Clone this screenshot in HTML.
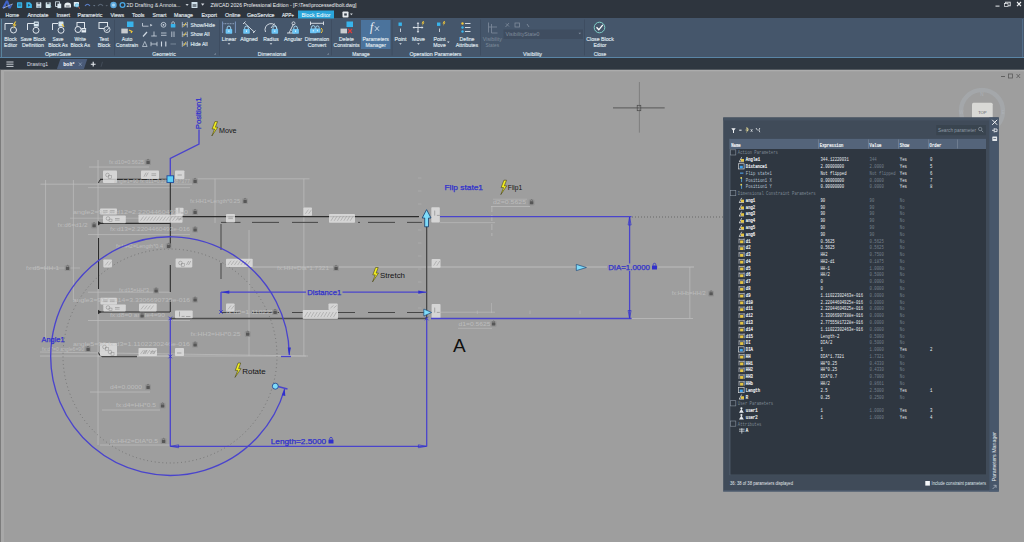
<!DOCTYPE html>
<html><head><meta charset="utf-8"><title>ZWCAD 2026 Professional Edition - bolt.dwg</title>
<style>
html,body{margin:0;padding:0;}
body{width:1024px;height:542px;overflow:hidden;position:relative;background:#9e9e9e;font-family:"Liberation Sans",sans-serif;}
svg{position:absolute;left:0;top:0;display:block;}
text{font-family:"Liberation Sans",sans-serif;}
.b{stroke:#dfe4eb;stroke-width:0.16px;}
.m{font-family:"Liberation Mono",monospace;}
</style></head><body>
<svg width="1024" height="542" viewBox="0 0 1024 542">
<rect x="0" y="0" width="1024" height="18" fill="#2e353e"/>
<rect x="0" y="18" width="1024" height="40" fill="#45566b"/>
<rect x="0" y="57" width="1024" height="1" fill="#5a85a6"/>
<rect x="0" y="58" width="1024" height="12" fill="#2f3740"/>
<rect x="0" y="70" width="1024" height="472" fill="#9e9e9e"/>
<rect x="0" y="69.7" width="1024" height="1.6" fill="#acacac"/>
<rect x="0" y="70" width="1" height="472" fill="#7c7c7c"/>
<rect x="1" y="70" width="3" height="472" fill="#a8a8a8"/>
<path d="M2 8 L6 0.5 L8 0.5 L10 6 L13 3.5 L10.5 8.5 L8.5 8.5 L7 3 L4.5 8.5 Z" fill="#3f63c8"/>
<path d="M3 8.2 L12.5 4" stroke="#c8d4ee" stroke-width="0.7" fill="none"/>
<rect x="17" y="2.2" width="5.2" height="5.7" rx="0.7" fill="#37b6ec"/><rect x="18" y="3.7" width="3.2" height="0.8" fill="#2e353e" opacity="0.7"/><rect x="18" y="5.4" width="3.2" height="0.8" fill="#2e353e" opacity="0.7"/>
<path d="M26.3 2.2 h3.6 l2 2 v3.7 h-5.6z" fill="#37b6ec"/><path d="M28 3.8 l2.4 1.5 l-2.4 1.5z" fill="#2e353e" opacity="0.75"/>
<rect x="36.3" y="2.2" width="5" height="5.7" rx="0.6" fill="#dbe9f2"/><rect x="37.5" y="2.2" width="2.6" height="2" fill="#2e353e" opacity="0.7"/><rect x="37.3" y="5.6" width="3" height="2.3" fill="#8fa3b3"/>
<rect x="45.7" y="2.2" width="5" height="5.7" rx="0.6" fill="#d4e8ee"/><rect x="46.9" y="2.2" width="2.6" height="2" fill="#2e353e" opacity="0.7"/><path d="M49.5 5 l1.8 1.6" stroke="#8fd0e8" stroke-width="1"/>
<rect x="55.6" y="1.8" width="3.8" height="4.6" fill="none" stroke="#dbe9f2" stroke-width="0.8"/><rect x="57.4" y="3.6" width="3.8" height="4.6" fill="#dbe9f2"/>
<path d="M64.4 7.6 v-2.2 a3.3 2.8 0 0 1 6.6 0 v2.2z" fill="#e8eef2"/><rect x="65.8" y="5.4" width="3.8" height="1.2" fill="#2e353e" opacity="0.6"/>
<rect x="73.8" y="2" width="5.2" height="4.6" rx="0.5" fill="#dbe9f2"/><circle cx="77" cy="5.4" r="1.7" fill="#9fdcf4" stroke="#49a8d6" stroke-width="0.6"/><path d="M78.2 6.8 L80 8.6" stroke="#e06040" stroke-width="0.9"/>
<path d="M85 6 q2.5 -3.5 5 0" stroke="#5b7fc8" stroke-width="1.1" fill="none"/><path d="M93 5 l1.2 1.6 l1.2 -1.6z" fill="#69788a"/>
<path d="M98 6 q2.5 -3.5 5 0" stroke="#5a6675" stroke-width="1.1" fill="none"/><path d="M105.5 5 l1.2 1.6 l1.2 -1.6z" fill="#59636f"/>
<circle cx="113.5" cy="5" r="3.2" fill="#5aa6dc"/><circle cx="113.5" cy="5" r="1.6" fill="#a7d4f2"/>
<circle cx="122.5" cy="5" r="2.4" fill="none" stroke="#49a8e6" stroke-width="1.3"/>
<text x="126.5" y="7.2" font-size="5.2" fill="#e2e6ea" text-anchor="start" textLength="54" lengthAdjust="spacingAndGlyphs" >2D Drafting &amp; Annota...</text>
<path d="M185.5 4 l1.6 2 l1.6 -2z" fill="#c9cfd6"/>
<rect x="191.5" y="2" width="6" height="6" rx="0.6" fill="#cfe0ea"/><rect x="192.6" y="4" width="3.8" height="3" fill="#2e353e" opacity="0.55"/>
<path d="M201 3.5 h3.4 l-1.7 2.2z" fill="#d7dce2"/>
<text x="210.5" y="7.2" font-size="5.2" fill="#eef1f4" text-anchor="start" textLength="146" lengthAdjust="spacingAndGlyphs" >ZWCAD 2026 Professional Edition - [F:\Test\processed\bolt.dwg]</text>
<rect x="995.5" y="5.6" width="4" height="1" fill="#e8ebee"/>
<rect x="1005.6" y="2.2" width="4.6" height="3.6" fill="none" stroke="#e8ebee" stroke-width="0.9"/><rect x="1004.6" y="3.6" width="3.4" height="2.8" fill="#2e353e" stroke="#e8ebee" stroke-width="0.7"/>
<path d="M1017 2 l4 4.2 M1021 2 l-4 4.2" stroke="#f2f4f6" stroke-width="1.1"/>
<text x="5.6" y="17.2" font-size="5.2" fill="#e6e9ed" text-anchor="start" textLength="13.5" lengthAdjust="spacingAndGlyphs" class="b">Home</text>
<text x="27.4" y="17.2" font-size="5.2" fill="#e6e9ed" text-anchor="start" textLength="20.9" lengthAdjust="spacingAndGlyphs" class="b">Annotate</text>
<text x="56.5" y="17.2" font-size="5.2" fill="#e6e9ed" text-anchor="start" textLength="13.5" lengthAdjust="spacingAndGlyphs" class="b">Insert</text>
<text x="77.5" y="17.2" font-size="5.2" fill="#e6e9ed" text-anchor="start" textLength="24.8" lengthAdjust="spacingAndGlyphs" class="b">Parametric</text>
<text x="110.5" y="17.2" font-size="5.2" fill="#e6e9ed" text-anchor="start" textLength="13.5" lengthAdjust="spacingAndGlyphs" class="b">Views</text>
<text x="132" y="17.2" font-size="5.2" fill="#e6e9ed" text-anchor="start" textLength="12.5" lengthAdjust="spacingAndGlyphs" class="b">Tools</text>
<text x="152.5" y="17.2" font-size="5.2" fill="#e6e9ed" text-anchor="start" textLength="14" lengthAdjust="spacingAndGlyphs" class="b">Smart</text>
<text x="174" y="17.2" font-size="5.2" fill="#e6e9ed" text-anchor="start" textLength="19" lengthAdjust="spacingAndGlyphs" class="b">Manage</text>
<text x="201.5" y="17.2" font-size="5.2" fill="#e6e9ed" text-anchor="start" textLength="15.5" lengthAdjust="spacingAndGlyphs" class="b">Export</text>
<text x="225" y="17.2" font-size="5.2" fill="#e6e9ed" text-anchor="start" textLength="15.5" lengthAdjust="spacingAndGlyphs" class="b">Online</text>
<text x="247" y="17.2" font-size="5.2" fill="#e6e9ed" text-anchor="start" textLength="27.5" lengthAdjust="spacingAndGlyphs" class="b">GeoService</text>
<text x="282" y="17.2" font-size="5.2" fill="#e6e9ed" text-anchor="start" textLength="12" lengthAdjust="spacingAndGlyphs" class="b">APP+</text>
<rect x="298" y="10.5" width="36" height="8" fill="#2aa5da"/>
<text x="316" y="17.0" font-size="5.2" fill="#ffffff" text-anchor="middle" textLength="29" lengthAdjust="spacingAndGlyphs" >Block Editor</text>
<rect x="342.5" y="11.5" width="6" height="6" rx="0.8" fill="#e6eaee"/><rect x="344.2" y="13.4" width="2.6" height="2.2" fill="#39424d"/>
<path d="M350 13.6 l1.4 1.6 l1.4 -1.6z" fill="#d7dce2"/>
<rect x="1" y="19" width="0.8" height="38" fill="#5f90aa"/>
<rect x="1022" y="19" width="0.8" height="38" fill="#56728f"/>
<path d="M5 30 V23.5 H13" stroke="#dfe5ec" stroke-width="1" fill="none"/><circle cx="13.5" cy="30" r="3" fill="none" stroke="#dfe5ec" stroke-width="1"/><path d="M15 21.5 l-2.5 4 h2 l-1.5 3.5 l3.5 -4.5 h-2 l1.8 -3z" fill="#f2c83a"/>
<text x="10.6" y="40.6" font-size="5.2" fill="#dfe4eb" text-anchor="middle" textLength="12.5" lengthAdjust="spacingAndGlyphs" class="b">Block</text>
<text x="10.6" y="47.2" font-size="5.2" fill="#dfe4eb" text-anchor="middle" textLength="13" lengthAdjust="spacingAndGlyphs" class="b">Editor</text>
<path d="M27.5 30 V23.5 H34" stroke="#dfe5ec" stroke-width="1" fill="none"/><circle cx="36" cy="30.3" r="3" fill="none" stroke="#dfe5ec" stroke-width="1"/><rect x="33.8" y="21.5" width="5" height="5" rx="0.6" fill="#d7e6f0"/><rect x="34.8" y="22.8" width="3" height="1" fill="#45566b"/>
<text x="33" y="40.6" font-size="5.2" fill="#dfe4eb" text-anchor="middle" textLength="25" lengthAdjust="spacingAndGlyphs" class="b">Save Block</text>
<text x="33" y="47.2" font-size="5.2" fill="#dfe4eb" text-anchor="middle" textLength="22" lengthAdjust="spacingAndGlyphs" class="b">Definition</text>
<path d="M52.5 30 V23.5 H58" stroke="#dfe5ec" stroke-width="1" fill="none"/><circle cx="61" cy="30.3" r="3" fill="none" stroke="#dfe5ec" stroke-width="1"/><rect x="58.5" y="21.5" width="5" height="5" rx="0.6" fill="#d7e6f0"/><path d="M62 24 l2 3" stroke="#f2c83a" stroke-width="1.2"/>
<text x="58" y="40.6" font-size="5.2" fill="#dfe4eb" text-anchor="middle" textLength="11" lengthAdjust="spacingAndGlyphs" class="b">Save</text>
<text x="58" y="47.2" font-size="5.2" fill="#dfe4eb" text-anchor="middle" textLength="19.5" lengthAdjust="spacingAndGlyphs" class="b">Block As</text>
<rect x="77" y="22.5" width="7.5" height="6.5" fill="none" stroke="#dfe5ec" stroke-width="1"/><circle cx="78" cy="29.5" r="3" fill="#45566b" stroke="#dfe5ec" stroke-width="1"/><rect x="81.5" y="28" width="4.6" height="4.6" rx="0.5" fill="#e6edf3"/><rect x="82.3" y="29.3" width="3" height="0.9" fill="#45566b"/>
<text x="80.3" y="40.6" font-size="5.2" fill="#dfe4eb" text-anchor="middle" textLength="11.5" lengthAdjust="spacingAndGlyphs" class="b">Write</text>
<text x="80.3" y="47.2" font-size="5.2" fill="#dfe4eb" text-anchor="middle" textLength="19.5" lengthAdjust="spacingAndGlyphs" class="b">Block As</text>
<rect x="99" y="22.5" width="8.5" height="6" fill="none" stroke="#dfe5ec" stroke-width="1"/><circle cx="107" cy="29.5" r="3" fill="#45566b" stroke="#dfe5ec" stroke-width="0.9"/><path d="M105.3 29.5 l1.3 1.3 l2.2 -2.6" stroke="#dfe5ec" stroke-width="0.9" fill="none"/>
<text x="104" y="40.6" font-size="5.2" fill="#dfe4eb" text-anchor="middle" textLength="9.5" lengthAdjust="spacingAndGlyphs" class="b">Test</text>
<text x="104" y="47.2" font-size="5.2" fill="#dfe4eb" text-anchor="middle" textLength="12.5" lengthAdjust="spacingAndGlyphs" class="b">Block</text>
<text x="58" y="55.6" font-size="5.2" fill="#dfe4eb" text-anchor="middle" textLength="26" lengthAdjust="spacingAndGlyphs" class="b">Open/Save</text>
<rect x="114.3" y="19.5" width="0.7" height="36" fill="#3b4a5d"/>
<rect x="127" y="21.5" width="6.5" height="5.5" fill="#38b4ec"/><rect x="121.3" y="28.6" width="6.5" height="4.8" fill="#c9ccd0"/><path d="M129 30 l3 1.5 l-1 1.5" stroke="#f2c83a" stroke-width="1.2" fill="none"/>
<text x="127" y="40.6" font-size="5.2" fill="#dfe4eb" text-anchor="middle" textLength="10.5" lengthAdjust="spacingAndGlyphs" class="b">Auto</text>
<text x="127" y="47.2" font-size="5.2" fill="#dfe4eb" text-anchor="middle" textLength="22.5" lengthAdjust="spacingAndGlyphs" class="b">Constrain</text>
<path d="M142.5 23 v3.2 h6" stroke="#cfd8e2" stroke-width="0.8" fill="none"/><path d="M150 24 l2.5 1 l-2 1.5z" fill="#cfd8e2"/>
<circle cx="163.5" cy="24.8" r="2.4" fill="none" stroke="#cfd8e2" stroke-width="0.8"/><circle cx="163.5" cy="24.8" r="0.9" fill="#cfd8e2"/>
<rect x="170.8" y="24" width="4.6" height="3.6" rx="0.5" fill="#38b4ec"/><path d="M171.8 24 v-1 a1.3 1.3 0 0 1 2.6 0 v1" stroke="#cfd8e2" stroke-width="0.7" fill="none"/>
<path d="M143 36.5 l4 -4.5" stroke="#cfd8e2" stroke-width="1.2"/>
<path d="M154 31.5 v4.5 M151.2 36 h5.6" stroke="#cfd8e2" stroke-width="0.8"/>
<path d="M161 33 h5.5 M161 35.3 h5.5" stroke="#cfd8e2" stroke-width="0.8"/>
<path d="M171.8 31.5 v5.5 M174 31.5 v5.5" stroke="#cfd8e2" stroke-width="0.8"/>
<path d="M142.5 46.5 l2.3 -5 l2.3 5z" stroke="#cfd8e2" stroke-width="0.7" fill="none"/>
<path d="M151 41.8 v4.4 M157 41.8 v4.4 M151 44 h6" stroke="#cfd8e2" stroke-width="0.8"/>
<path d="M161.5 41.5 v5 M165.8 41.5 v5" stroke="#cfd8e2" stroke-width="1.1"/>
<path d="M170.5 44 h5.5" stroke="#8794a4" stroke-width="0.8"/>
<path d="M182.3 21.9 v5.6 M187.3 21.9 v5.6 M182.3 24.7 h5" stroke="#cfd8e2" stroke-width="0.7"/><path d="M183.5 26.7 l2.5 -4" stroke="#f2c83a" stroke-width="0.9"/>
<text x="190.5" y="26.599999999999998" font-size="5.2" fill="#dfe4eb" text-anchor="start" textLength="24.5" lengthAdjust="spacingAndGlyphs" class="b">Show/Hide</text>
<path d="M182.3 31.499999999999996 v5.6 M187.3 31.499999999999996 v5.6 M182.3 34.3 h5" stroke="#cfd8e2" stroke-width="0.7"/><path d="M183.5 36.3 l2.5 -4" stroke="#f2c83a" stroke-width="0.9"/>
<text x="190.5" y="36.199999999999996" font-size="5.2" fill="#dfe4eb" text-anchor="start" textLength="19" lengthAdjust="spacingAndGlyphs" class="b">Show All</text>
<path d="M182.3 41.2 v5.6 M187.3 41.2 v5.6 M182.3 44 h5" stroke="#cfd8e2" stroke-width="0.7"/><path d="M183.5 46 l2.5 -4" stroke="#f2c83a" stroke-width="0.9"/>
<text x="190.5" y="45.9" font-size="5.2" fill="#dfe4eb" text-anchor="start" textLength="17" lengthAdjust="spacingAndGlyphs" class="b">Hide All</text>
<text x="164" y="55.6" font-size="5.2" fill="#dfe4eb" text-anchor="middle" textLength="23.5" lengthAdjust="spacingAndGlyphs" class="b">Geometric</text>
<path d="M214.2 54.6 l1.4 -1.4 v1.4z" fill="#b9c4d0"/>
<rect x="219" y="19.5" width="0.7" height="36" fill="#3b4a5d"/>
<path d="M222.6 21.5 v11.5 M235.4 21.5 v11.5" stroke="#7f9cc8" stroke-width="0.9" fill="none"/><path d="M223.5 23.7 h11" stroke="#a9bcd8" stroke-width="0.8" stroke-dasharray="1 0.6" fill="none"/>
<rect x="225.6" y="29.1" width="6.6" height="4.6" rx="0.6" fill="#6cc4f4"/><path d="M227.1 29.1 v-1.2 a1.8 1.8 0 0 1 3.6 0 v1.2" stroke="#a8dcf8" stroke-width="0.9" fill="none"/><rect x="228.4" y="30.4" width="1" height="1.6" fill="#d8f0fc"/>
<text x="229" y="40.6" font-size="5.2" fill="#dfe4eb" text-anchor="middle" textLength="14.5" lengthAdjust="spacingAndGlyphs" class="b">Linear</text>
<path d="M227.7 43.2 l1.3 1.5 l1.3 -1.5z" fill="#dfe5ec"/>
<path d="M243 24 l2.5 -2.5 M253 33 l2.5 -2.5 M244.3 22.8 l10 9.2" stroke="#dfe5ec" stroke-width="0.9" fill="none"/>
<rect x="243.2" y="29.1" width="6.6" height="4.6" rx="0.6" fill="#6cc4f4"/><path d="M244.7 29.1 v-1.2 a1.8 1.8 0 0 1 3.6 0 v1.2" stroke="#a8dcf8" stroke-width="0.9" fill="none"/><rect x="246.0" y="30.4" width="1" height="1.6" fill="#d8f0fc"/>
<text x="249" y="40.6" font-size="5.2" fill="#dfe4eb" text-anchor="middle" textLength="17.5" lengthAdjust="spacingAndGlyphs" class="b">Aligned</text>
<path d="M265.5 32 a6 6 0 1 1 11.5 -2.5" stroke="#dfe5ec" stroke-width="0.9" fill="none"/><path d="M271 28 l3.5 -4.5" stroke="#dfe5ec" stroke-width="0.9"/>
<rect x="271.5" y="29.1" width="6.6" height="4.6" rx="0.6" fill="#6cc4f4"/><path d="M273.0 29.1 v-1.2 a1.8 1.8 0 0 1 3.6 0 v1.2" stroke="#a8dcf8" stroke-width="0.9" fill="none"/><rect x="274.3" y="30.4" width="1" height="1.6" fill="#d8f0fc"/>
<text x="271" y="40.6" font-size="5.2" fill="#dfe4eb" text-anchor="middle" textLength="15.5" lengthAdjust="spacingAndGlyphs" class="b">Radius</text>
<path d="M269.7 43.2 l1.3 1.5 l1.3 -1.5z" fill="#dfe5ec"/>
<path d="M287 33 h8 M289 33 l4.5 -9" stroke="#dfe5ec" stroke-width="0.9" fill="none"/><circle cx="293.5" cy="23.3" r="1.5" fill="none" stroke="#dfe5ec" stroke-width="0.8"/><path d="M290.5 29.5 a4 4 0 0 1 2.5 3.5" stroke="#dfe5ec" stroke-width="0.7" fill="none"/>
<rect x="292.3" y="29.1" width="6.6" height="4.6" rx="0.6" fill="#6cc4f4"/><path d="M293.8 29.1 v-1.2 a1.8 1.8 0 0 1 3.6 0 v1.2" stroke="#a8dcf8" stroke-width="0.9" fill="none"/><rect x="295.1" y="30.4" width="1" height="1.6" fill="#d8f0fc"/>
<text x="293" y="40.6" font-size="5.2" fill="#dfe4eb" text-anchor="middle" textLength="18" lengthAdjust="spacingAndGlyphs" class="b">Angular</text>
<path d="M310.5 21.5 v3.6 M323.5 21.5 v3.6 M310.5 23.3 h13" stroke="#dfe5ec" stroke-width="0.9" fill="none"/><path d="M321 28 a3 3 0 0 1 0 5" stroke="#f2c83a" stroke-width="1" fill="none"/>
<rect x="310" y="28.6" width="6.6" height="4.6" rx="0.6" fill="#6cc4f4"/><path d="M311.5 28.6 v-1.2 a1.8 1.8 0 0 1 3.6 0 v1.2" stroke="#a8dcf8" stroke-width="0.9" fill="none"/><rect x="312.8" y="29.9" width="1" height="1.6" fill="#d8f0fc"/>
<rect x="314.5" y="28.6" width="5.9399999999999995" height="4.14" rx="0.6" fill="#6cc4f4"/><path d="M315.85 28.6 v-1.08 a1.62 1.62 0 0 1 3.24 0 v1.08" stroke="#a8dcf8" stroke-width="0.9" fill="none"/><rect x="316.97" y="29.77" width="1" height="1.44" fill="#d8f0fc"/>
<text x="317" y="40.6" font-size="5.2" fill="#dfe4eb" text-anchor="middle" textLength="24.5" lengthAdjust="spacingAndGlyphs" class="b">Dimension</text>
<text x="317" y="47.2" font-size="5.2" fill="#dfe4eb" text-anchor="middle" textLength="18.5" lengthAdjust="spacingAndGlyphs" class="b">Convert</text>
<text x="272" y="55.6" font-size="5.2" fill="#dfe4eb" text-anchor="middle" textLength="28.5" lengthAdjust="spacingAndGlyphs" class="b">Dimensional</text>
<path d="M327.2 54.6 l1.4 -1.4 v1.4z" fill="#b9c4d0"/>
<rect x="331" y="19.5" width="0.7" height="36" fill="#3b4a5d"/>
<rect x="346.5" y="21.5" width="6.5" height="5.5" fill="#38b4ec"/><rect x="340.5" y="28.6" width="6.5" height="4.8" fill="#c9ccd0"/><path d="M348 29 l4 4 M352 29 l-4 4" stroke="#e03c3c" stroke-width="1.1"/>
<text x="346.5" y="40.6" font-size="5.2" fill="#dfe4eb" text-anchor="middle" textLength="15" lengthAdjust="spacingAndGlyphs" class="b">Delete</text>
<text x="346.5" y="47.2" font-size="5.2" fill="#dfe4eb" text-anchor="middle" textLength="26" lengthAdjust="spacingAndGlyphs" class="b">Constraints</text>
<rect x="361" y="20" width="29.5" height="29" fill="#4b739c"/>
<text x="370" y="30.5" font-size="11.5" fill="#f0f4f8" text-anchor="start" style="font-style:italic;font-family:&quot;Liberation Serif&quot;,serif">f</text>
<path d="M375 26.3 l4 4.5 M379 26.3 l-4 4.5" stroke="#f0f4f8" stroke-width="0.8"/>
<text x="375.7" y="40.6" font-size="5.2" fill="#dfe4eb" text-anchor="middle" textLength="26.5" lengthAdjust="spacingAndGlyphs" class="b">Parameters</text>
<text x="375.7" y="47.2" font-size="5.2" fill="#dfe4eb" text-anchor="middle" textLength="20.5" lengthAdjust="spacingAndGlyphs" class="b">Manager</text>
<text x="361" y="55.6" font-size="5.2" fill="#dfe4eb" text-anchor="middle" textLength="17.5" lengthAdjust="spacingAndGlyphs" class="b">Manage</text>
<rect x="391.7" y="19.5" width="0.7" height="36" fill="#3b4a5d"/>
<rect x="398.5" y="22.5" width="3.4" height="3.4" fill="#38b4ec"/><path d="M400.5 28.5 v3.5" stroke="#dfe5ec" stroke-width="0.8"/>
<text x="400.5" y="40.6" font-size="5.2" fill="#dfe4eb" text-anchor="middle" textLength="12" lengthAdjust="spacingAndGlyphs" class="b">Point</text>
<path d="M399.2 43.2 l1.3 1.5 l1.3 -1.5z" fill="#dfe5ec"/>
<path d="M413.5 27.5 h9 M418 23 v9" stroke="#dfe5ec" stroke-width="0.9"/><path d="M412.5 27.5 l1.8 -1.3 v2.6z M423.5 27.5 l-1.8 -1.3 v2.6z M418 22 l-1.3 1.8 h2.6z M418 33 l-1.3 -1.8 h2.6z" fill="#dfe5ec"/><path d="M423 21 l-1.5 2.5 h1.4 l-1 2.5 l2.6 -3.4 h-1.4 l1 -1.6z" fill="#f2c83a"/>
<text x="418.5" y="40.6" font-size="5.2" fill="#dfe4eb" text-anchor="middle" textLength="13" lengthAdjust="spacingAndGlyphs" class="b">Move</text>
<path d="M417.2 43.2 l1.3 1.5 l1.3 -1.5z" fill="#dfe5ec"/>
<rect x="437" y="22.5" width="3.4" height="3.4" fill="#38b4ec"/><path d="M439.5 28.5 v3.5" stroke="#dfe5ec" stroke-width="0.8"/><path d="M444 21 l-1.5 2.5 h1.4 l-1 2.5 l2.6 -3.4 h-1.4 l1 -1.6z" fill="#f2c83a"/>
<text x="439.5" y="40.6" font-size="5.2" fill="#dfe4eb" text-anchor="middle" textLength="12" lengthAdjust="spacingAndGlyphs" class="b">Point</text>
<text x="439.5" y="47.2" font-size="5.2" fill="#dfe4eb" text-anchor="middle" textLength="12.5" lengthAdjust="spacingAndGlyphs" class="b">Move</text>
<path d="M447.0 41.5 l1.3 1.5 l1.3 -1.5z" fill="#dfe5ec"/>
<circle cx="462.5" cy="23.5" r="1.2" fill="#f2c83a"/><circle cx="462.5" cy="27.5" r="1.2" fill="#38b4ec"/><circle cx="462.5" cy="31.5" r="1.2" fill="#38b4ec"/><path d="M465 23.5 h5.5 M465 27.5 h5.5 M465 31.5 h5.5" stroke="#dfe5ec" stroke-width="0.9"/>
<text x="467" y="40.6" font-size="5.2" fill="#dfe4eb" text-anchor="middle" textLength="15" lengthAdjust="spacingAndGlyphs" class="b">Define</text>
<text x="467" y="47.2" font-size="5.2" fill="#dfe4eb" text-anchor="middle" textLength="22.5" lengthAdjust="spacingAndGlyphs" class="b">Attributes</text>
<text x="435.5" y="55.6" font-size="5.2" fill="#dfe4eb" text-anchor="middle" textLength="52" lengthAdjust="spacingAndGlyphs" class="b">Operation Parameters</text>
<rect x="480" y="19.5" width="0.7" height="36" fill="#3b4a5d"/>
<path d="M488.5 22.5 v10 M488.5 27 h8.5 M491.5 24 v9 h6" stroke="#7f8c9c" stroke-width="0.8" fill="none"/>
<text x="492.3" y="40.6" font-size="5.2" fill="#7f8c9c" text-anchor="middle" textLength="19" lengthAdjust="spacingAndGlyphs" >Visibility</text>
<text x="492.3" y="47.2" font-size="5.2" fill="#7f8c9c" text-anchor="middle" textLength="13.5" lengthAdjust="spacingAndGlyphs" >States</text>
<rect x="503.5" y="29.5" width="79.5" height="9.5" fill="#3f4d60"/>
<text x="505.5" y="36.2" font-size="4.6" fill="#7f8c9c" text-anchor="start" textLength="34" lengthAdjust="spacingAndGlyphs" >VisibilityState0</text>
<path d="M578.5 32.8 l1.3 1.5 l1.3 -1.5z" fill="#7f8c9c"/>
<path d="M505.5 27 l3.5 -4 M506 23.5 l3 3" stroke="#7f8c9c" stroke-width="0.8"/><rect x="515" y="23" width="4.5" height="4" fill="none" stroke="#7f8c9c" stroke-width="0.8"/><path d="M527 24 l2 3" stroke="#7f8c9c" stroke-width="0.9"/>
<text x="532.5" y="55.6" font-size="5.2" fill="#dfe4eb" text-anchor="middle" textLength="19" lengthAdjust="spacingAndGlyphs" class="b">Visibility</text>
<rect x="584" y="19.5" width="0.7" height="36" fill="#3b4a5d"/>
<circle cx="599.5" cy="27.5" r="5.3" fill="none" stroke="#7fd0c8" stroke-width="1"/><path d="M596.5 27.3 l2.3 2.5 l4 -5" stroke="#ffffff" stroke-width="1.3" fill="none"/>
<text x="600" y="40.6" font-size="5.2" fill="#dfe4eb" text-anchor="middle" textLength="27.5" lengthAdjust="spacingAndGlyphs" class="b">Close Block</text>
<text x="600" y="47.2" font-size="5.2" fill="#dfe4eb" text-anchor="middle" textLength="13" lengthAdjust="spacingAndGlyphs" class="b">Editor</text>
<text x="600" y="55.6" font-size="5.2" fill="#dfe4eb" text-anchor="middle" textLength="12.5" lengthAdjust="spacingAndGlyphs" class="b">Close</text>
<path d="M6.4 62 h7.1 M6.4 64.2 h7.1 M6.4 66.4 h7.1" stroke="#c9ced4" stroke-width="1"/>
<text x="27" y="66.2" font-size="5.2" fill="#d8dce1" text-anchor="start" textLength="21" lengthAdjust="spacingAndGlyphs" >Drawing1</text>
<path d="M56.8 69.2 L60.4 59 H87.3 L83.8 69.2 Z" fill="#4a5b78"/>
<text x="63.3" y="66.2" font-size="5.4" fill="#ffffff" text-anchor="start" textLength="11.2" lengthAdjust="spacingAndGlyphs" font-weight="bold">bolt*</text>
<path d="M78.9 62.6 l2.8 3.2 M81.7 62.6 l-2.8 3.2" stroke="#8fa2ba" stroke-width="0.7"/>
<path d="M90.8 64.2 h4.8 M93.2 61.8 v4.8" stroke="#e8ecf0" stroke-width="1.1"/>
<path d="M101 66.8 l1.5 -5" stroke="#4a5562" stroke-width="0.7"/>
<path d="M89 167 L149 167" stroke="#bebebe" stroke-width="0.7" fill="none" />
<path d="M98 160 L98 445" stroke="#bebebe" stroke-width="0.7" fill="none" />
<path d="M40.5 184.2 L192 184.2" stroke="#bebebe" stroke-width="0.7" fill="none" />
<path d="M45.6 180 L45.6 340" stroke="#bebebe" stroke-width="0.7" fill="none" />
<path d="M73.4 180 L73.4 300" stroke="#bebebe" stroke-width="0.7" fill="none" />
<path d="M215 178.8 L215 223" stroke="#bebebe" stroke-width="0.7" fill="none" />
<path d="M303.9 178.8 L303.9 356" stroke="#bebebe" stroke-width="0.7" fill="none" />
<path d="M196 178.8 L309.5 178.8" stroke="#bebebe" stroke-width="0.7" fill="none" />
<path d="M249 230 L249 356" stroke="#bebebe" stroke-width="0.7" fill="none" />
<path d="M88 187.6 L190 187.6" stroke="#bebebe" stroke-width="0.6" fill="none" />
<path d="M70 218.2 L170 218.2" stroke="#bebebe" stroke-width="0.6" fill="none" />
<path d="M88 234.6 L190 234.6" stroke="#bebebe" stroke-width="0.7" fill="none" />
<path d="M88 292.2 L170 292.2" stroke="#bebebe" stroke-width="0.7" fill="none" />
<path d="M88 320.5 L190 320.5" stroke="#bebebe" stroke-width="0.7" fill="none" />
<path d="M40 352 L308 356" stroke="#bebebe" stroke-width="0.7" fill="none" />
<path d="M40 356 L306 356" stroke="#bebebe" stroke-width="0.7" fill="none" />
<path d="M98 356 L170 356" stroke="#bebebe" stroke-width="1.2" fill="none" />
<path d="M90 392 L150 392" stroke="#bebebe" stroke-width="0.7" fill="none" />
<path d="M102 410 L160 410" stroke="#bebebe" stroke-width="0.7" fill="none" />
<path d="M100 445 L170 445" stroke="#bebebe" stroke-width="0.7" fill="none" />
<path d="M252 267 L694 267" stroke="#c9c9c9" stroke-width="0.7" fill="none" />
<path d="M30 268 L80 268" stroke="#bebebe" stroke-width="0.6" fill="none" />
<path d="M632 318.5 L693 318.5" stroke="#bebebe" stroke-width="0.7" fill="none" />
<path d="M689.8 267 L689.8 318.5" stroke="#bebebe" stroke-width="0.7" fill="none" />
<path d="M491 206.5 L530 206.5" stroke="#bebebe" stroke-width="0.7" fill="none" />
<path d="M493 199.2 L527 199.2" stroke="#bebebe" stroke-width="0.5" fill="none" />
<path d="M491.9 206 L491.9 236" stroke="#bebebe" stroke-width="0.7" fill="none" stroke-dasharray="6 3"/>
<path d="M440 222.6 L495 222.6" stroke="#bebebe" stroke-width="0.6" fill="none" />
<path d="M491.5 303 L491.5 313" stroke="#bebebe" stroke-width="0.5" fill="none" />
<path d="M477.3 310.5 L477.3 314" stroke="#bebebe" stroke-width="0.5" fill="none" />
<path d="M530 310.5 L530 314" stroke="#bebebe" stroke-width="0.5" fill="none" />
<path d="M580 310.5 L580 314" stroke="#bebebe" stroke-width="0.5" fill="none" />
<circle cx="170" cy="356" r="107" fill="none" stroke="#666666" stroke-width="0.8" stroke-dasharray="0.9 2.9"/>
<path d="M418 178 h3.5 M418 191 h3.5 M418 204 h3.5 M418 217 h3.5 M418 230 h3.5 M418 243 h3.5 M418 256 h3.5 M418 269 h3.5 M418 282 h3.5 M418 295 h3.5 M418 308 h3.5 " stroke="#b4b4b4" stroke-width="0.6"/>
<path d="M100 179.3 L170 179.3" stroke="#2c2c2c" stroke-width="1.3" fill="none" />
<path d="M98.5 183 q0.5 -3.5 3.5 -3.7" stroke="#2c2c2c" stroke-width="1" fill="none"/>
<path d="M170.3 180 L170.3 247" stroke="#2c2c2c" stroke-width="1.1" fill="none" />
<path d="M170.3 265 L170.3 292" stroke="#2c2c2c" stroke-width="1.1" fill="none" />
<path d="M170.3 300 L170.3 312" stroke="#2c2c2c" stroke-width="1.1" fill="none" />
<path d="M170 216.6 L419 216.6" stroke="#2c2c2c" stroke-width="1.2" fill="none" />
<path d="M98.5 223.3 L170 223.3" stroke="#2c2c2c" stroke-width="1.2" fill="none" />
<path d="M98 221 l3.5 2.3 l-3.5 2.3z" fill="#2c2c2c"/>
<path d="M98.5 238 L98.5 289" stroke="#2c2c2c" stroke-width="1.1" fill="none" />
<path d="M98.5 312 L170 312" stroke="#2c2c2c" stroke-width="1.2" fill="none" />
<path d="M98 309.7 l3.5 2.3 l-3.5 2.3z" fill="#2c2c2c"/>
<path d="M102 356.5 L137 356.5" stroke="#4a4a4a" stroke-width="1.4" fill="none" />
<path d="M98.5 352.5 q0.5 3.5 3.5 3.8" stroke="#2c2c2c" stroke-width="1" fill="none"/>
<path d="M170 318.5 L426.6 318.5" stroke="#4c4c4c" stroke-width="1.5" fill="none" />
<path d="M426.7 226 L426.7 318" stroke="#3a3a3a" stroke-width="1.1" fill="none" />
<path d="M221 222.4 H240.5 M252 222.4 H279 M292 222.4 H318 M358 222.4 H360 M368 222.4 H395 M407 222.4 H422" stroke="#3c3c3c" stroke-width="0.9" fill="none"/>
<path d="M221 312.5 H240.5 M252 312.5 H279 M292 312.5 H303 M338 312.5 H355 M368 312.5 H395 M407 312.5 H424" stroke="#3c3c3c" stroke-width="0.9" fill="none"/>
<path d="M221 224 V279" stroke="#3c3c3c" stroke-width="0.9" stroke-dasharray="26 13" fill="none"/>
<path d="M632 217 L735 217" stroke="#5a5a5a" stroke-width="0.8" fill="none" stroke-dasharray="1 2"/>
<rect x="103" y="170.5" width="14" height="12.5" rx="0.8" fill="#e2e2e2" opacity="0.8"/>
<rect x="141" y="170.5" width="18" height="8.5" rx="0.8" fill="#e2e2e2" opacity="0.8"/>
<rect x="175" y="170.5" width="9.4" height="8.5" rx="0.8" fill="#e2e2e2" opacity="0.8"/>
<rect x="100" y="208.6" width="17" height="5.9" rx="0.8" fill="#e2e2e2" opacity="0.8"/>
<rect x="103" y="215.5" width="22.8" height="7.8" rx="0.8" fill="#e2e2e2" opacity="0.8"/>
<rect x="138.5" y="214.5" width="44.0" height="8.2" rx="0.8" fill="#e2e2e2" opacity="0.8"/>
<path d="M140.5 220.7 l3 -4.2 M143.7 220.7 l3 -4.2 M146.9 220.7 l3 -4.2 M150.1 220.7 l3 -4.2 M153.3 220.7 l3 -4.2 M156.5 220.7 l3 -4.2 M159.7 220.7 l3 -4.2 M162.9 220.7 l3 -4.2 M166.1 220.7 l3 -4.2 M169.3 220.7 l3 -4.2 M172.5 220.7 l3 -4.2 M175.7 220.7 l3 -4.2 M178.9 220.7 l3 -4.2 " stroke="#9c9c9c" stroke-width="0.6" fill="none"/>
<rect x="175.6" y="207.7" width="7.9" height="7.8" rx="0.8" fill="#e2e2e2" opacity="0.8"/>
<rect x="226" y="214" width="9" height="8.6" rx="0.8" fill="#e2e2e2" opacity="0.8"/>
<rect x="303.4" y="207.6" width="8.6" height="8.2" rx="0.8" fill="#e2e2e2" opacity="0.8"/>
<path d="M305.4 213.8 l3 -4.2 M308.6 213.8 l3 -4.2 " stroke="#9c9c9c" stroke-width="0.6" fill="none"/>
<rect x="329" y="214" width="26" height="8.8" rx="0.8" fill="#e2e2e2" opacity="0.8"/>
<path d="M331 220.8 l3 -4.8 M334.2 220.8 l3 -4.8 M337.4 220.8 l3 -4.8 M340.6 220.8 l3 -4.8 M343.8 220.8 l3 -4.8 M347.0 220.8 l3 -4.8 M350.2 220.8 l3 -4.8 " stroke="#9c9c9c" stroke-width="0.6" fill="none"/>
<rect x="431.3" y="207.3" width="8.5" height="15.3" rx="0.8" fill="#e2e2e2" opacity="0.8"/>
<rect x="103.3" y="259.5" width="8.7" height="7.9" rx="0.8" fill="#e2e2e2" opacity="0.8"/>
<path d="M105.3 265.4 l3 -3.9 M108.5 265.4 l3 -3.9 " stroke="#9c9c9c" stroke-width="0.6" fill="none"/>
<rect x="175.6" y="258.6" width="16.7" height="8.8" rx="0.8" fill="#e2e2e2" opacity="0.8"/>
<rect x="226" y="258.7" width="26.7" height="8.3" rx="0.8" fill="#e2e2e2" opacity="0.8"/>
<path d="M228 265 l3 -4.3 M231.2 265 l3 -4.3 M234.4 265 l3 -4.3 M237.6 265 l3 -4.3 M240.8 265 l3 -4.3 M244.0 265 l3 -4.3 M247.2 265 l3 -4.3 " stroke="#9c9c9c" stroke-width="0.6" fill="none"/>
<rect x="431.6" y="259" width="8.9" height="8.7" rx="0.8" fill="#e2e2e2" opacity="0.8"/>
<path d="M433.6 265.7 l3 -4.7 M436.8 265.7 l3 -4.7 " stroke="#9c9c9c" stroke-width="0.6" fill="none"/>
<rect x="100.4" y="297.7" width="16.6" height="6.8" rx="0.8" fill="#e2e2e2" opacity="0.8"/>
<rect x="103.3" y="304.5" width="22.5" height="6.9" rx="0.8" fill="#e2e2e2" opacity="0.8"/>
<rect x="139" y="303.5" width="17.7" height="7.9" rx="0.8" fill="#e2e2e2" opacity="0.8"/>
<path d="M141 309.4 l3 -3.9 M144.2 309.4 l3 -3.9 M147.4 309.4 l3 -3.9 M150.6 309.4 l3 -3.9 " stroke="#9c9c9c" stroke-width="0.6" fill="none"/>
<rect x="175" y="310.4" width="17.7" height="7.8" rx="0.8" fill="#e2e2e2" opacity="0.8"/>
<rect x="226" y="303.5" width="8.6" height="7.9" rx="0.8" fill="#e2e2e2" opacity="0.8"/>
<path d="M228 309.4 l3 -3.9 M231.2 309.4 l3 -3.9 " stroke="#9c9c9c" stroke-width="0.6" fill="none"/>
<rect x="302.7" y="310" width="35.3" height="9" rx="0.8" fill="#e2e2e2" opacity="0.8"/>
<path d="M304.7 317 l3 -5 M307.9 317 l3 -5 M311.1 317 l3 -5 M314.3 317 l3 -5 M317.5 317 l3 -5 M320.7 317 l3 -5 M323.9 317 l3 -5 M327.1 317 l3 -5 M330.3 317 l3 -5 M333.5 317 l3 -5 " stroke="#9c9c9c" stroke-width="0.6" fill="none"/>
<rect x="328.5" y="303.5" width="9.2" height="6.5" rx="0.8" fill="#e2e2e2" opacity="0.8"/>
<path d="M330.5 308 l3 -2.5 M333.7 308 l3 -2.5 " stroke="#9c9c9c" stroke-width="0.6" fill="none"/>
<rect x="431.6" y="304" width="8.9" height="14.5" rx="0.8" fill="#e2e2e2" opacity="0.8"/>
<rect x="100" y="343" width="17" height="13" rx="0.8" fill="#e2e2e2" opacity="0.8"/>
<rect x="138.5" y="348" width="18.5" height="8" rx="0.8" fill="#e2e2e2" opacity="0.8"/>
<path d="M140.5 354 l3 -4 M143.7 354 l3 -4 M146.9 354 l3 -4 M150.1 354 l3 -4 M153.3 354 l3 -4 " stroke="#9c9c9c" stroke-width="0.6" fill="none"/>
<rect x="175" y="348" width="9" height="8" rx="0.8" fill="#e2e2e2" opacity="0.8"/>
<circle cx="107.5" cy="175" r="1.8" fill="none" stroke="#8e8e8e" stroke-width="0.6"/><rect x="108.5" y="175.6" width="3" height="2.6" fill="none" stroke="#8e8e8e" stroke-width="0.5"/>
<path d="M144 176.6 l2.2 -4 M146 176.6 l2.2 -4" stroke="#8e8e8e" stroke-width="0.6"/>
<path d="M151.5 173.8 h4.6 M151.5 175.4 h4.6" stroke="#8e8e8e" stroke-width="0.6"/>
<path d="M177.5 175.0 h4.4" stroke="#8e8e8e" stroke-width="0.7"/>
<path d="M103 210.6 h4.6 M103 212.2 h4.6" stroke="#8e8e8e" stroke-width="0.6"/>
<path d="M110 210.6 h4.6 M110 212.2 h4.6" stroke="#8e8e8e" stroke-width="0.6"/>
<circle cx="108" cy="218.5" r="1.8" fill="none" stroke="#8e8e8e" stroke-width="0.6"/><rect x="109" y="219.1" width="3" height="2.6" fill="none" stroke="#8e8e8e" stroke-width="0.5"/>
<path d="M115 218.5 h4.6 M115 220.1 h4.6" stroke="#8e8e8e" stroke-width="0.6"/>
<path d="M179.0 208.1 v5 M181.1 212.9 h3" stroke="#8e8e8e" stroke-width="0.7"/>
<path d="M177.5 219.0 h4.4" stroke="#8e8e8e" stroke-width="0.7"/>
<path d="M228.3 217 h4.6 M228.3 218.6 h4.6" stroke="#8e8e8e" stroke-width="0.6"/>
<path d="M434.7 210.6 v5 M436.8 215.4 h3" stroke="#8e8e8e" stroke-width="0.7"/>
<path d="M434.7 307.6 v5 M436.8 312.4 h3" stroke="#8e8e8e" stroke-width="0.7"/>
<path d="M103 300 h4.6 M103 301.6 h4.6" stroke="#8e8e8e" stroke-width="0.6"/>
<path d="M110 300 h4.6 M110 301.6 h4.6" stroke="#8e8e8e" stroke-width="0.6"/>
<circle cx="108" cy="307.5" r="1.8" fill="none" stroke="#8e8e8e" stroke-width="0.6"/><rect x="109" y="308.1" width="3" height="2.6" fill="none" stroke="#8e8e8e" stroke-width="0.5"/>
<path d="M115 307.5 h4.6 M115 309.1 h4.6" stroke="#8e8e8e" stroke-width="0.6"/>
<path d="M179.5 311.6 v5 M181.6 316.4 h3" stroke="#8e8e8e" stroke-width="0.7"/>
<path d="M186 316.5 h4.4" stroke="#8e8e8e" stroke-width="0.7"/>
<circle cx="180.5" cy="263" r="1.8" fill="none" stroke="#8e8e8e" stroke-width="0.6"/><rect x="181.5" y="263.6" width="3" height="2.6" fill="none" stroke="#8e8e8e" stroke-width="0.5"/>
<path d="M186.5 265 l2.2 -4 M188.5 265 l2.2 -4" stroke="#8e8e8e" stroke-width="0.6"/>
<circle cx="104.5" cy="347" r="1.8" fill="none" stroke="#8e8e8e" stroke-width="0.6"/><rect x="105.5" y="347.6" width="3" height="2.6" fill="none" stroke="#8e8e8e" stroke-width="0.5"/>
<circle cx="110" cy="352" r="1.8" fill="none" stroke="#8e8e8e" stroke-width="0.6"/><rect x="111" y="352.6" width="3" height="2.6" fill="none" stroke="#8e8e8e" stroke-width="0.5"/>
<path d="M143 354 l2.2 -4 M145 354 l2.2 -4" stroke="#8e8e8e" stroke-width="0.6"/>
<path d="M150.5 351.4 h4.6 M150.5 353.0 h4.6" stroke="#8e8e8e" stroke-width="0.6"/>
<path d="M177 353.0 h4.4" stroke="#8e8e8e" stroke-width="0.7"/>
<text x="109" y="163.9" font-size="5.6" fill="#c2c2c2" text-anchor="start" textLength="35" lengthAdjust="spacingAndGlyphs" opacity="0.85">fx:d10=0.5625</text>
<rect x="145.2" y="159.3" width="5.8" height="5.8" rx="1.2" fill="#8c8c8c" opacity="0.7"/><rect x="146.4" y="160.9" width="3.4" height="3" rx="0.4" fill="#565656"/><path d="M147.2 160.9 v-0.7 a0.9 0.9 0 0 1 1.8 0 v0.7" stroke="#606060" stroke-width="0.6" fill="none"/>
<text x="114" y="182.9" font-size="5.6" fill="#c2c2c2" text-anchor="start" textLength="76" lengthAdjust="spacingAndGlyphs" opacity="0.85">angle1=90 fx:d11=0.2296887377</text>
<rect x="192.2" y="178.3" width="5.8" height="5.8" rx="1.2" fill="#8c8c8c" opacity="0.7"/><rect x="193.4" y="179.9" width="3.4" height="3" rx="0.4" fill="#565656"/><path d="M194.2 179.9 v-0.7 a0.9 0.9 0 0 1 1.8 0 v0.7" stroke="#606060" stroke-width="0.6" fill="none"/>
<text x="190" y="202.9" font-size="5.6" fill="#c2c2c2" text-anchor="start" textLength="50" lengthAdjust="spacingAndGlyphs" opacity="0.85">fx:HH1=Length*0.25</text>
<rect x="242.2" y="198.3" width="5.8" height="5.8" rx="1.2" fill="#8c8c8c" opacity="0.7"/><rect x="243.4" y="199.9" width="3.4" height="3" rx="0.4" fill="#565656"/><path d="M244.2 199.9 v-0.7 a0.9 0.9 0 0 1 1.8 0 v0.7" stroke="#606060" stroke-width="0.6" fill="none"/>
<text x="73" y="213.9" font-size="5.6" fill="#c2c2c2" text-anchor="start" textLength="115" lengthAdjust="spacingAndGlyphs" opacity="0.85">angle2=90 fx:d12=2.2204460493e-0</text>
<rect x="192.2" y="209.3" width="5.8" height="5.8" rx="1.2" fill="#8c8c8c" opacity="0.7"/><rect x="193.4" y="210.9" width="3.4" height="3" rx="0.4" fill="#565656"/><path d="M194.2 210.9 v-0.7 a0.9 0.9 0 0 1 1.8 0 v0.7" stroke="#606060" stroke-width="0.6" fill="none"/>
<text x="57.5" y="227.20000000000002" font-size="5.6" fill="#c2c2c2" text-anchor="start" textLength="30" lengthAdjust="spacingAndGlyphs" opacity="0.85">fx:d6=d1/2</text>
<rect x="91.2" y="222.6" width="5.8" height="5.8" rx="1.2" fill="#8c8c8c" opacity="0.7"/><rect x="92.4" y="224.2" width="3.4" height="3" rx="0.4" fill="#565656"/><path d="M93.2 224.2 v-0.7 a0.9 0.9 0 0 1 1.8 0 v0.7" stroke="#606060" stroke-width="0.6" fill="none"/>
<text x="110" y="231.4" font-size="5.6" fill="#c2c2c2" text-anchor="start" textLength="80" lengthAdjust="spacingAndGlyphs" opacity="0.85">fx:d13=2.2204460493e-016</text>
<rect x="192.2" y="226.8" width="5.8" height="5.8" rx="1.2" fill="#8c8c8c" opacity="0.7"/><rect x="193.4" y="228.4" width="3.4" height="3" rx="0.4" fill="#565656"/><path d="M194.2 228.4 v-0.7 a0.9 0.9 0 0 1 1.8 0 v0.7" stroke="#606060" stroke-width="0.6" fill="none"/>
<text x="116" y="247.9" font-size="5.6" fill="#c2c2c2" text-anchor="start" textLength="47" lengthAdjust="spacingAndGlyphs" opacity="0.85">fx:HH2=Length*0.4</text>
<rect x="165.7" y="243.3" width="5.8" height="5.8" rx="1.2" fill="#8c8c8c" opacity="0.7"/><rect x="166.9" y="244.9" width="3.4" height="3" rx="0.4" fill="#565656"/><path d="M167.7 244.9 v-0.7 a0.9 0.9 0 0 1 1.8 0 v0.7" stroke="#606060" stroke-width="0.6" fill="none"/>
<text x="26" y="269.9" font-size="5.6" fill="#c2c2c2" text-anchor="start" textLength="33" lengthAdjust="spacingAndGlyphs" opacity="0.85">fx:d5=HH-1</text>
<rect x="64.7" y="265.3" width="5.8" height="5.8" rx="1.2" fill="#8c8c8c" opacity="0.7"/><rect x="65.9" y="266.9" width="3.4" height="3" rx="0.4" fill="#565656"/><path d="M66.7 266.9 v-0.7 a0.9 0.9 0 0 1 1.8 0 v0.7" stroke="#606060" stroke-width="0.6" fill="none"/>
<text x="277" y="269.9" font-size="5.6" fill="#c2c2c2" text-anchor="start" textLength="52" lengthAdjust="spacingAndGlyphs" opacity="0.85">fx:HH=Dia*1.7321</text>
<rect x="333.2" y="265.3" width="5.8" height="5.8" rx="1.2" fill="#8c8c8c" opacity="0.7"/><rect x="334.4" y="266.9" width="3.4" height="3" rx="0.4" fill="#565656"/><path d="M335.2 266.9 v-0.7 a0.9 0.9 0 0 1 1.8 0 v0.7" stroke="#606060" stroke-width="0.6" fill="none"/>
<text x="119" y="292.4" font-size="5.6" fill="#c2c2c2" text-anchor="start" textLength="30" lengthAdjust="spacingAndGlyphs" opacity="0.85">fx:d15=HH*3</text>
<rect x="153.2" y="287.8" width="5.8" height="5.8" rx="1.2" fill="#8c8c8c" opacity="0.7"/><rect x="154.4" y="289.4" width="3.4" height="3" rx="0.4" fill="#565656"/><path d="M155.2 289.4 v-0.7 a0.9 0.9 0 0 1 1.8 0 v0.7" stroke="#606060" stroke-width="0.6" fill="none"/>
<text x="73" y="301.5" font-size="5.6" fill="#c2c2c2" text-anchor="start" textLength="117" lengthAdjust="spacingAndGlyphs" opacity="0.85">angle3=90 fx:d14=3.3306690739e-016</text>
<rect x="192.2" y="296.9" width="5.8" height="5.8" rx="1.2" fill="#8c8c8c" opacity="0.7"/><rect x="193.4" y="298.5" width="3.4" height="3" rx="0.4" fill="#565656"/><path d="M194.2 298.5 v-0.7 a0.9 0.9 0 0 1 1.8 0 v0.7" stroke="#606060" stroke-width="0.6" fill="none"/>
<text x="110" y="317.4" font-size="5.6" fill="#c2c2c2" text-anchor="start" textLength="55" lengthAdjust="spacingAndGlyphs" opacity="0.85">fx:d8=0 angle4=90</text>
<rect x="139.2" y="312.8" width="5.8" height="5.8" rx="1.2" fill="#8c8c8c" opacity="0.7"/><rect x="140.4" y="314.4" width="3.4" height="3" rx="0.4" fill="#565656"/><path d="M141.2 314.4 v-0.7 a0.9 0.9 0 0 1 1.8 0 v0.7" stroke="#606060" stroke-width="0.6" fill="none"/>
<text x="226" y="313.9" font-size="5.6" fill="#c2c2c2" text-anchor="start" textLength="48" lengthAdjust="spacingAndGlyphs" opacity="0.85">fx:d9=1.110223</text>
<rect x="272.2" y="309.3" width="5.8" height="5.8" rx="1.2" fill="#8c8c8c" opacity="0.7"/><rect x="273.4" y="310.9" width="3.4" height="3" rx="0.4" fill="#565656"/><path d="M274.2 310.9 v-0.7 a0.9 0.9 0 0 1 1.8 0 v0.7" stroke="#606060" stroke-width="0.6" fill="none"/>
<text x="190.5" y="335.7" font-size="5.6" fill="#c2c2c2" text-anchor="start" textLength="50" lengthAdjust="spacingAndGlyphs" opacity="0.85">fx:HH3=HH*0.25</text>
<rect x="244.79999999999998" y="331.1" width="5.8" height="5.8" rx="1.2" fill="#8c8c8c" opacity="0.7"/><rect x="246.0" y="332.7" width="3.4" height="3" rx="0.4" fill="#565656"/><path d="M246.79999999999998 332.7 v-0.7 a0.9 0.9 0 0 1 1.8 0 v0.7" stroke="#606060" stroke-width="0.6" fill="none"/>
<text x="73" y="346.4" font-size="5.6" fill="#c2c2c2" text-anchor="start" textLength="117" lengthAdjust="spacingAndGlyphs" opacity="0.85">angle5=90 fx:d3=1.1102230246e-016</text>
<rect x="192.2" y="341.8" width="5.8" height="5.8" rx="1.2" fill="#8c8c8c" opacity="0.7"/><rect x="193.4" y="343.4" width="3.4" height="3" rx="0.4" fill="#565656"/><path d="M194.2 343.4 v-0.7 a0.9 0.9 0 0 1 1.8 0 v0.7" stroke="#606060" stroke-width="0.6" fill="none"/>
<text x="42" y="350.9" font-size="5.6" fill="#c2c2c2" text-anchor="start" textLength="42" lengthAdjust="spacingAndGlyphs" opacity="0.85">fx:d7=0 angle6=90</text>
<rect x="85.2" y="346.3" width="5.8" height="5.8" rx="1.2" fill="#8c8c8c" opacity="0.7"/><rect x="86.4" y="347.9" width="3.4" height="3" rx="0.4" fill="#565656"/><path d="M87.2 347.9 v-0.7 a0.9 0.9 0 0 1 1.8 0 v0.7" stroke="#606060" stroke-width="0.6" fill="none"/>
<text x="110" y="388.9" font-size="5.6" fill="#c2c2c2" text-anchor="start" textLength="32" lengthAdjust="spacingAndGlyphs" opacity="0.85">d4=0.0000</text>
<rect x="145.2" y="384.3" width="5.8" height="5.8" rx="1.2" fill="#8c8c8c" opacity="0.7"/><rect x="146.4" y="385.9" width="3.4" height="3" rx="0.4" fill="#565656"/><path d="M147.2 385.9 v-0.7 a0.9 0.9 0 0 1 1.8 0 v0.7" stroke="#606060" stroke-width="0.6" fill="none"/>
<text x="116" y="407.4" font-size="5.6" fill="#c2c2c2" text-anchor="start" textLength="40" lengthAdjust="spacingAndGlyphs" opacity="0.85">fx:d4=HH*0.5</text>
<rect x="159.7" y="402.8" width="5.8" height="5.8" rx="1.2" fill="#8c8c8c" opacity="0.7"/><rect x="160.9" y="404.4" width="3.4" height="3" rx="0.4" fill="#565656"/><path d="M161.7 404.4 v-0.7 a0.9 0.9 0 0 1 1.8 0 v0.7" stroke="#606060" stroke-width="0.6" fill="none"/>
<text x="110" y="442.9" font-size="5.6" fill="#c2c2c2" text-anchor="start" textLength="48" lengthAdjust="spacingAndGlyphs" opacity="0.85">fx:HH2=DIA*0.5</text>
<rect x="160.7" y="438.3" width="5.8" height="5.8" rx="1.2" fill="#8c8c8c" opacity="0.7"/><rect x="161.9" y="439.9" width="3.4" height="3" rx="0.4" fill="#565656"/><path d="M162.7 439.9 v-0.7 a0.9 0.9 0 0 1 1.8 0 v0.7" stroke="#606060" stroke-width="0.6" fill="none"/>
<text x="493" y="204.20000000000002" font-size="5.6" fill="#c2c2c2" text-anchor="start" textLength="33" lengthAdjust="spacingAndGlyphs" opacity="0.85">d2=0.5625</text>
<rect x="528.7" y="199.6" width="5.8" height="5.8" rx="1.2" fill="#8c8c8c" opacity="0.7"/><rect x="529.9" y="201.2" width="3.4" height="3" rx="0.4" fill="#565656"/><path d="M530.7 201.2 v-0.7 a0.9 0.9 0 0 1 1.8 0 v0.7" stroke="#606060" stroke-width="0.6" fill="none"/>
<text x="458.6" y="325.5" font-size="5.6" fill="#c2c2c2" text-anchor="start" textLength="32" lengthAdjust="spacingAndGlyphs" opacity="0.85">d1=0.5625</text>
<rect x="490.7" y="320.9" width="5.8" height="5.8" rx="1.2" fill="#8c8c8c" opacity="0.7"/><rect x="491.9" y="322.5" width="3.4" height="3" rx="0.4" fill="#565656"/><path d="M492.7 322.5 v-0.7 a0.9 0.9 0 0 1 1.8 0 v0.7" stroke="#606060" stroke-width="0.6" fill="none"/>
<path d="M458 328.3 L492 328.3" stroke="#bebebe" stroke-width="0.6" fill="none" />
<path d="M440 312.2 L495 312.2" stroke="#bebebe" stroke-width="0.6" fill="none" />
<text x="671.7" y="295.29999999999995" font-size="5.6" fill="#c2c2c2" text-anchor="start" textLength="34" lengthAdjust="spacingAndGlyphs" opacity="0.85">fx:HHb=HH/2</text>
<rect x="708.2" y="290.7" width="5.8" height="5.8" rx="1.2" fill="#8c8c8c" opacity="0.7"/><rect x="709.4" y="292.3" width="3.4" height="3" rx="0.4" fill="#565656"/><path d="M710.2 292.3 v-0.7 a0.9 0.9 0 0 1 1.8 0 v0.7" stroke="#606060" stroke-width="0.6" fill="none"/>
<path d="M199 129.5 V144 L170.3 158.5 V176" stroke="#4a44cc" stroke-width="1.35" fill="none"/>
<text transform="translate(200.7,129.3) rotate(-90)" font-size="7.6" fill="#3030cc" stroke="#3030cc" stroke-width="0.25" textLength="32" lengthAdjust="spacingAndGlyphs">Position1</text>
<rect x="167" y="175.8" width="6.6" height="6.6" fill="#5fd0f6" stroke="#1c4a9c" stroke-width="0.9"/>
<path d="M289.3 355 A119.3 119.3 0 1 0 284.7 388.9" stroke="#4a44cc" stroke-width="1.35" fill="none"/>
<path d="M289.3 355.5 l-1.6 -8 h3.2z" fill="#3030cc"/>
<path d="M281 356.5 L291 356.5" stroke="#4a44cc" stroke-width="1.3" fill="none" />
<path d="M284.7 388.9 l-2.8 6.4 l3.4 0.8z" fill="#3030cc"/>
<path d="M278 386.5 L287.5 389" stroke="#4a44cc" stroke-width="1.3" fill="none" />
<circle cx="275.3" cy="386.2" r="3" fill="#7fdcfa" stroke="#1c3c8c" stroke-width="0.8"/>
<text x="41.5" y="341.5" font-size="7.6" fill="#3030cc" text-anchor="start" textLength="23" lengthAdjust="spacingAndGlyphs" stroke="#3030cc" stroke-width="0.25">Angle1</text>
<path d="M221 292.2 L426.5 292.2" stroke="#4a44cc" stroke-width="1.3" fill="none" />
<path d="M221.3 292.2 l8 -1.6 v3.2z M426.3 292.2 l-8 -1.6 v3.2z" fill="#3030cc"/>
<rect x="306" y="288.5" width="36.5" height="7" fill="#9e9e9e"/>
<text x="307.2" y="295" font-size="7.6" fill="#3030cc" text-anchor="start" textLength="34" lengthAdjust="spacingAndGlyphs" stroke="#3030cc" stroke-width="0.25">Distance1</text>
<path d="M221 292 L221 312" stroke="#4a44cc" stroke-width="1.3" fill="none" />
<path d="M219.2 310.2 l3.6 3.6 M222.8 310.2 l-3.6 3.6" stroke="#3030cc" stroke-width="0.8"/>
<path d="M170.3 318.5 L170.3 446.5" stroke="#4a44cc" stroke-width="1.3" fill="none" />
<path d="M168.5 316.7 l3.6 3.6 M172.1 316.7 l-3.6 3.6 M168.5 354.7 l3.6 3.6 M172.1 354.7 l-3.6 3.6" stroke="#3030cc" stroke-width="0.8"/>
<path d="M170.3 446.3 L426.7 446.3" stroke="#4a44cc" stroke-width="1.3" fill="none" />
<path d="M170.6 446.3 l8 -1.5 v3z" fill="none" stroke="#3030cc" stroke-width="0.7"/><path d="M426.4 446.3 l-8 -1.5 v3z" fill="none" stroke="#3030cc" stroke-width="0.7"/>
<path d="M426.7 318.5 L426.7 446.5" stroke="#4a44cc" stroke-width="1.3" fill="none" />
<path d="M424.9 316.7 l3.6 3.6 M428.5 316.7 l-3.6 3.6" stroke="#3030cc" stroke-width="0.8"/>
<text x="270.7" y="443.6" font-size="7.6" fill="#3030cc" text-anchor="start" textLength="55.5" lengthAdjust="spacingAndGlyphs" stroke="#3030cc" stroke-width="0.25">Length=2.5000</text>
<rect x="328.5" y="439.6" width="5" height="4" rx="0.4" fill="#3030cc"/><path d="M329.7 439.6 v-1 a1.3 1.3 0 0 1 2.6 0 v1" stroke="#3030cc" stroke-width="0.8" fill="none"/>
<path d="M440 216.7 L631.5 216.7" stroke="#4a44cc" stroke-width="1.3" fill="none" />
<path d="M431 318.5 L631.5 318.5" stroke="#4a44cc" stroke-width="1.3" fill="none" />
<path d="M629.6 217 L629.6 318.5" stroke="#4a44cc" stroke-width="1.3" fill="none" />
<path d="M629.6 217 l-1.5 8 h3z M629.6 318.5 l-1.5 -8 h3z" fill="none" stroke="#3030cc" stroke-width="0.7"/>
<rect x="607" y="263.5" width="51" height="7.5" fill="#9e9e9e"/>
<text x="608.2" y="270.2" font-size="7.6" fill="#3030cc" text-anchor="start" textLength="41.7" lengthAdjust="spacingAndGlyphs" stroke="#3030cc" stroke-width="0.25">DIA=1.0000</text>
<rect x="652" y="265.6" width="5" height="4" rx="0.4" fill="#3030cc"/><path d="M653.2 265.6 v-1 a1.3 1.3 0 0 1 2.6 0 v1" stroke="#3030cc" stroke-width="0.8" fill="none"/>
<path d="M576.3 264.4 L586.4 267.5 L576.3 270.6Z" fill="#7fdcfa" stroke="#1c4a7c" stroke-width="0.7"/>
<path d="M426.6 209.6 L431 218 H428.5 V226.8 H424.7 V218 H422.2Z" fill="#7fdcfa" stroke="#153c6c" stroke-width="0.8"/>
<path d="M423.8 309 L431.6 312.5 L423.8 316Z" fill="#7fdcfa" stroke="#1c4a7c" stroke-width="0.7"/>
<path d="M214.9 121.6 L212.1 129.0 L214.6 129.0 L211.8 136.0 L217.8 127.2 L215.4 127.2 L217.5 121.6Z" fill="#f2ee24" stroke="#3c3810" stroke-width="0.55"/>
<text x="219" y="133" font-size="7" fill="#141414" text-anchor="start" textLength="17.5" lengthAdjust="spacingAndGlyphs" >Move</text>
<path d="M503.9 180.2 L501.1 187.6 L503.6 187.6 L500.8 194.6 L506.8 185.8 L504.4 185.8 L506.5 180.2Z" fill="#f2ee24" stroke="#3c3810" stroke-width="0.55"/>
<text x="507.8" y="190" font-size="7" fill="#141414" text-anchor="start" textLength="14.5" lengthAdjust="spacingAndGlyphs" >Flip1</text>
<text x="444.5" y="190" font-size="7.6" fill="#3030cc" text-anchor="start" textLength="38.5" lengthAdjust="spacingAndGlyphs" stroke="#3030cc" stroke-width="0.25">Flip state1</text>
<path d="M375.6 267.5 L372.8 274.9 L375.3 274.9 L372.5 281.9 L378.5 273.1 L376.1 273.1 L378.2 267.5Z" fill="#f2ee24" stroke="#3c3810" stroke-width="0.55"/>
<text x="380" y="277.6" font-size="7" fill="#141414" text-anchor="start" textLength="25" lengthAdjust="spacingAndGlyphs" >Stretch</text>
<path d="M238.1 363.0 L235.3 370.4 L237.8 370.4 L235.0 377.4 L241.0 368.6 L238.6 368.6 L240.7 363.0Z" fill="#f2ee24" stroke="#3c3810" stroke-width="0.55"/>
<text x="242.2" y="374" font-size="7" fill="#141414" text-anchor="start" textLength="23.5" lengthAdjust="spacingAndGlyphs" >Rotate</text>
<text x="453" y="352" font-size="19" fill="#101010" text-anchor="start" >A</text>
<path d="M613 107.9 L664.7 107.9" stroke="#505050" stroke-width="0.9" fill="none" />
<path d="M639.4 82 L639.4 132.6" stroke="#767676" stroke-width="0.8" fill="none" />
<rect x="637.2" y="105.3" width="3.6" height="5.4" fill="none" stroke="#4a4a4a" stroke-width="0.7"/>
<circle cx="982" cy="111" r="21" fill="none" stroke="#aab0b6" stroke-width="4.5" opacity="0.5"/>
<rect x="972" y="102.8" width="20.7" height="16" rx="1.5" fill="#d9d9d6"/>
<text x="982.4" y="113.8" font-size="4.2" fill="#5a5f66" text-anchor="middle" >TOP</text>
<text x="982" y="96.2" font-size="4.6" fill="#acb1b6" text-anchor="middle" >N</text>
<text x="961.5" y="113.5" font-size="4.6" fill="#acb1b6" text-anchor="middle" >W</text>
<text x="1003" y="113.5" font-size="4.6" fill="#acb1b6" text-anchor="middle" >E</text>
<path d="M1001 76.5 h4" stroke="#5a5a5a" stroke-width="0.9"/><rect x="1008.5" y="74" width="4" height="4" fill="none" stroke="#5a5a5a" stroke-width="0.8"/><path d="M1016.5 74 l3.6 4 M1020.1 74 l-3.6 4" stroke="#5a5a5a" stroke-width="0.8"/>
<rect x="723.2" y="117.5" width="275.5" height="374.0" fill="#404b59"/>
<rect x="723.2" y="117.5" width="275.5" height="3" fill="#465362"/>
<rect x="989.3" y="117.5" width="9.400000000000091" height="374.0" fill="#47566a"/>
<rect x="723.2" y="490.5" width="275.5" height="1" fill="#55647a"/>
<rect x="729.5" y="138.7" width="256.5" height="336.5" fill="#2f3741"/>
<rect x="729.5" y="138.7" width="256.5" height="10.3" fill="#54647a"/>
<rect x="729.5" y="138.7" width="0.8" height="336.5" fill="#5d6b7c"/>
<rect x="729.5" y="474.6" width="256.5" height="0.7" fill="#4c5967"/>
<rect x="818" y="139.5" width="0.7" height="9" fill="#7b899a"/>
<rect x="868" y="139.5" width="0.7" height="9" fill="#7b899a"/>
<rect x="898.3" y="139.5" width="0.7" height="9" fill="#7b899a"/>
<rect x="928.4" y="139.5" width="0.7" height="9" fill="#7b899a"/>
<rect x="957" y="139.5" width="0.7" height="9" fill="#7b899a"/>
<text x="731.2" y="146.5" font-size="4.9" fill="#f2f4f6" text-anchor="start" textLength="9.4" lengthAdjust="spacingAndGlyphs" class="m" stroke="#f2f4f6" stroke-width="0.22">Name</text>
<text x="819.8" y="146.5" font-size="4.9" fill="#f2f4f6" text-anchor="start" textLength="23.6" lengthAdjust="spacingAndGlyphs" class="m" stroke="#f2f4f6" stroke-width="0.22">Expression</text>
<text x="869.6" y="146.5" font-size="4.9" fill="#f2f4f6" text-anchor="start" textLength="11.8" lengthAdjust="spacingAndGlyphs" class="m" stroke="#f2f4f6" stroke-width="0.22">Value</text>
<text x="899.8" y="146.5" font-size="4.9" fill="#f2f4f6" text-anchor="start" textLength="9.4" lengthAdjust="spacingAndGlyphs" class="m" stroke="#f2f4f6" stroke-width="0.22">Show</text>
<text x="929.6" y="146.5" font-size="4.9" fill="#f2f4f6" text-anchor="start" textLength="11.8" lengthAdjust="spacingAndGlyphs" class="m" stroke="#f2f4f6" stroke-width="0.22">Order</text>
<path d="M731.3 128.3 h4.4 l-1.7 2.2 v2.4 h-1 v-2.4z" fill="#eef1f4"/><path d="M739.2 130.2 h2.4" stroke="#eef1f4" stroke-width="1"/>
<path d="M746 128 q2.2 -0.6 2 1.5 q-0.2 1.8 -1.6 2.6 M745.6 130 h2.6" stroke="#efe39a" stroke-width="0.9" fill="none"/><path d="M750.8 129.2 l1.6 2.6 M752.4 129.2 l-1.6 2.6" stroke="#e8ecef" stroke-width="0.7"/>
<path d="M756 128 l1.6 2.4 M759.8 128 q-1.8 2 0 4.2" stroke="#e8ecef" stroke-width="0.8" fill="none"/>
<rect x="936.3" y="125" width="49.5" height="10.2" fill="#39444f"/>
<text x="938" y="131.8" font-size="4.8" fill="#8d98a4" text-anchor="start" textLength="38" lengthAdjust="spacingAndGlyphs" >Search parameter</text>
<circle cx="980.2" cy="129" r="1.7" fill="none" stroke="#8d98a4" stroke-width="0.7"/><path d="M981.4 130.3 l1.8 1.9" stroke="#8d98a4" stroke-width="0.8"/>
<path d="M992.2 119.8 l5 5 M997.2 119.8 l-5 5" stroke="#f2f4f6" stroke-width="1"/>
<path d="M992 130.3 h2.2 M994.2 128.2 v4.2 M994.4 129 h2.6 v2.6 h-2.6" stroke="#e4e8ec" stroke-width="0.9" fill="none"/>
<rect x="992.3" y="136.4" width="4.8" height="4.6" rx="0.5" fill="#e4e8ec"/><rect x="993.3" y="138" width="2.8" height="0.7" fill="#4a5a6e"/>
<text transform="translate(996.4,481.5) rotate(-90)" font-size="4.8" fill="#e8ecf0" textLength="49.5" lengthAdjust="spacingAndGlyphs">Parameters Manager</text>
<path d="M992.6 489 l3.4 -3.4 M993.5 485.3 h2.6 v2.6" stroke="#c9d0d8" stroke-width="0.6" fill="none"/>
<rect x="730.6" y="149.8" width="5.2" height="5.2" fill="#2f3741" stroke="#8b96a2" stroke-width="0.6"/>
<text x="737.8" y="154.4" font-size="4.9" fill="#7d8894" text-anchor="start" textLength="40.1" lengthAdjust="spacingAndGlyphs" class="m" >Action Parameters</text>
<path d="M739 161.78 h5 M739.3 161.78 l2.4 -4.6" stroke="#f0f2f4" stroke-width="0.7" fill="none"/><rect x="741" y="158.98000000000002" width="3" height="2.6" fill="#e4c544"/>
<text x="745.8" y="161.2" font-size="4.9" fill="#eef1f4" text-anchor="start" textLength="14.2" lengthAdjust="spacingAndGlyphs" class="m" stroke="#eef1f4" stroke-width="0.22">Angle1</text>
<text x="820.5" y="161.2" font-size="4.9" fill="#eef1f4" text-anchor="start" textLength="28.3" lengthAdjust="spacingAndGlyphs" class="m" >344.12220031</text>
<text x="869.6" y="161.2" font-size="4.9" fill="#76818d" text-anchor="start" textLength="7.1" lengthAdjust="spacingAndGlyphs" class="m" >344</text>
<text x="899.8" y="161.2" font-size="4.9" fill="#eef1f4" text-anchor="start" textLength="7.1" lengthAdjust="spacingAndGlyphs" class="m" >Yes</text>
<text x="930" y="161.2" font-size="4.9" fill="#eef1f4" text-anchor="start" textLength="2.4" lengthAdjust="spacingAndGlyphs" class="m" >0</text>
<rect x="738.5" y="163.76000000000002" width="5.6" height="5.2" fill="none" stroke="#e8eaec" stroke-width="0.6"/><rect x="739.8" y="165.76000000000002" width="3" height="2.6" fill="#3ea2ee"/>
<text x="745.8" y="168.0" font-size="4.9" fill="#eef1f4" text-anchor="start" textLength="21.2" lengthAdjust="spacingAndGlyphs" class="m" stroke="#eef1f4" stroke-width="0.22">Distance1</text>
<text x="820.5" y="168.0" font-size="4.9" fill="#eef1f4" text-anchor="start" textLength="23.6" lengthAdjust="spacingAndGlyphs" class="m" >2.00000000</text>
<text x="869.6" y="168.0" font-size="4.9" fill="#76818d" text-anchor="start" textLength="14.2" lengthAdjust="spacingAndGlyphs" class="m" >2.0000</text>
<text x="899.8" y="168.0" font-size="4.9" fill="#eef1f4" text-anchor="start" textLength="7.1" lengthAdjust="spacingAndGlyphs" class="m" >Yes</text>
<text x="930" y="168.0" font-size="4.9" fill="#eef1f4" text-anchor="start" textLength="2.4" lengthAdjust="spacingAndGlyphs" class="m" >5</text>
<path d="M740 173.14 h3.4" stroke="#4c9be0" stroke-width="1.2"/>
<text x="745.8" y="174.7" font-size="4.9" fill="#b8c4d2" text-anchor="start" textLength="26.0" lengthAdjust="spacingAndGlyphs" class="m" >Flip state1</text>
<text x="820.5" y="174.7" font-size="4.9" fill="#eef1f4" text-anchor="start" textLength="26.0" lengthAdjust="spacingAndGlyphs" class="m" >Not flipped</text>
<text x="869.6" y="174.7" font-size="4.9" fill="#76818d" text-anchor="start" textLength="26.0" lengthAdjust="spacingAndGlyphs" class="m" >Not flipped</text>
<text x="899.8" y="174.7" font-size="4.9" fill="#eef1f4" text-anchor="start" textLength="7.1" lengthAdjust="spacingAndGlyphs" class="m" >Yes</text>
<text x="930" y="174.7" font-size="4.9" fill="#eef1f4" text-anchor="start" textLength="2.4" lengthAdjust="spacingAndGlyphs" class="m" >6</text>
<path d="M741.6 177.51999999999998 v4.6" stroke="#5ab0e8" stroke-width="0.8"/><circle cx="741.2" cy="177.92" r="0.9" fill="#e8d45a"/>
<text x="745.8" y="181.5" font-size="4.9" fill="#b8c4d2" text-anchor="start" textLength="26.0" lengthAdjust="spacingAndGlyphs" class="m" >Position1 X</text>
<text x="820.5" y="181.5" font-size="4.9" fill="#eef1f4" text-anchor="start" textLength="23.6" lengthAdjust="spacingAndGlyphs" class="m" >0.00000000</text>
<text x="869.6" y="181.5" font-size="4.9" fill="#76818d" text-anchor="start" textLength="14.2" lengthAdjust="spacingAndGlyphs" class="m" >0.0000</text>
<text x="899.8" y="181.5" font-size="4.9" fill="#eef1f4" text-anchor="start" textLength="7.1" lengthAdjust="spacingAndGlyphs" class="m" >Yes</text>
<text x="930" y="181.5" font-size="4.9" fill="#eef1f4" text-anchor="start" textLength="2.4" lengthAdjust="spacingAndGlyphs" class="m" >7</text>
<path d="M741.6 184.29999999999998 v4.6" stroke="#5ab0e8" stroke-width="0.8"/><circle cx="741.2" cy="184.7" r="0.9" fill="#e8d45a"/>
<text x="745.8" y="188.3" font-size="4.9" fill="#b8c4d2" text-anchor="start" textLength="26.0" lengthAdjust="spacingAndGlyphs" class="m" >Position1 Y</text>
<text x="820.5" y="188.3" font-size="4.9" fill="#eef1f4" text-anchor="start" textLength="23.6" lengthAdjust="spacingAndGlyphs" class="m" >0.00000000</text>
<text x="869.6" y="188.3" font-size="4.9" fill="#76818d" text-anchor="start" textLength="14.2" lengthAdjust="spacingAndGlyphs" class="m" >0.0000</text>
<text x="899.8" y="188.3" font-size="4.9" fill="#eef1f4" text-anchor="start" textLength="7.1" lengthAdjust="spacingAndGlyphs" class="m" >Yes</text>
<text x="930" y="188.3" font-size="4.9" fill="#eef1f4" text-anchor="start" textLength="2.4" lengthAdjust="spacingAndGlyphs" class="m" >8</text>
<rect x="730.6" y="190.5" width="5.2" height="5.2" fill="#2f3741" stroke="#8b96a2" stroke-width="0.6"/>
<text x="737.8" y="195.1" font-size="4.9" fill="#7d8894" text-anchor="start" textLength="77.9" lengthAdjust="spacingAndGlyphs" class="m" >Dimensional Constraint Parameters</text>
<path d="M739 202.45999999999998 h5 M739.3 202.45999999999998 l2.4 -4.6" stroke="#f0f2f4" stroke-width="0.7" fill="none"/><rect x="741" y="199.66" width="3" height="2.6" fill="#e4c544"/>
<text x="745.8" y="201.9" font-size="4.9" fill="#eef1f4" text-anchor="start" textLength="9.4" lengthAdjust="spacingAndGlyphs" class="m" stroke="#eef1f4" stroke-width="0.22">ang1</text>
<text x="820.5" y="201.9" font-size="4.9" fill="#eef1f4" text-anchor="start" textLength="4.7" lengthAdjust="spacingAndGlyphs" class="m" >90</text>
<text x="869.6" y="201.9" font-size="4.9" fill="#76818d" text-anchor="start" textLength="4.7" lengthAdjust="spacingAndGlyphs" class="m" >90</text>
<text x="899.8" y="201.9" font-size="4.9" fill="#76818d" text-anchor="start" textLength="4.7" lengthAdjust="spacingAndGlyphs" class="m" >No</text>
<path d="M739 209.23999999999998 h5 M739.3 209.23999999999998 l2.4 -4.6" stroke="#f0f2f4" stroke-width="0.7" fill="none"/><rect x="741" y="206.44" width="3" height="2.6" fill="#e4c544"/>
<text x="745.8" y="208.6" font-size="4.9" fill="#eef1f4" text-anchor="start" textLength="9.4" lengthAdjust="spacingAndGlyphs" class="m" stroke="#eef1f4" stroke-width="0.22">ang2</text>
<text x="820.5" y="208.6" font-size="4.9" fill="#eef1f4" text-anchor="start" textLength="4.7" lengthAdjust="spacingAndGlyphs" class="m" >90</text>
<text x="869.6" y="208.6" font-size="4.9" fill="#76818d" text-anchor="start" textLength="4.7" lengthAdjust="spacingAndGlyphs" class="m" >90</text>
<text x="899.8" y="208.6" font-size="4.9" fill="#76818d" text-anchor="start" textLength="4.7" lengthAdjust="spacingAndGlyphs" class="m" >No</text>
<path d="M739 216.01999999999998 h5 M739.3 216.01999999999998 l2.4 -4.6" stroke="#f0f2f4" stroke-width="0.7" fill="none"/><rect x="741" y="213.22" width="3" height="2.6" fill="#e4c544"/>
<text x="745.8" y="215.4" font-size="4.9" fill="#eef1f4" text-anchor="start" textLength="9.4" lengthAdjust="spacingAndGlyphs" class="m" stroke="#eef1f4" stroke-width="0.22">ang3</text>
<text x="820.5" y="215.4" font-size="4.9" fill="#eef1f4" text-anchor="start" textLength="4.7" lengthAdjust="spacingAndGlyphs" class="m" >90</text>
<text x="869.6" y="215.4" font-size="4.9" fill="#76818d" text-anchor="start" textLength="4.7" lengthAdjust="spacingAndGlyphs" class="m" >90</text>
<text x="899.8" y="215.4" font-size="4.9" fill="#76818d" text-anchor="start" textLength="4.7" lengthAdjust="spacingAndGlyphs" class="m" >No</text>
<path d="M739 222.79999999999998 h5 M739.3 222.79999999999998 l2.4 -4.6" stroke="#f0f2f4" stroke-width="0.7" fill="none"/><rect x="741" y="220.0" width="3" height="2.6" fill="#e4c544"/>
<text x="745.8" y="222.2" font-size="4.9" fill="#eef1f4" text-anchor="start" textLength="9.4" lengthAdjust="spacingAndGlyphs" class="m" stroke="#eef1f4" stroke-width="0.22">ang4</text>
<text x="820.5" y="222.2" font-size="4.9" fill="#eef1f4" text-anchor="start" textLength="4.7" lengthAdjust="spacingAndGlyphs" class="m" >90</text>
<text x="869.6" y="222.2" font-size="4.9" fill="#76818d" text-anchor="start" textLength="4.7" lengthAdjust="spacingAndGlyphs" class="m" >90</text>
<text x="899.8" y="222.2" font-size="4.9" fill="#76818d" text-anchor="start" textLength="4.7" lengthAdjust="spacingAndGlyphs" class="m" >No</text>
<path d="M739 229.57999999999998 h5 M739.3 229.57999999999998 l2.4 -4.6" stroke="#f0f2f4" stroke-width="0.7" fill="none"/><rect x="741" y="226.78" width="3" height="2.6" fill="#e4c544"/>
<text x="745.8" y="229.0" font-size="4.9" fill="#eef1f4" text-anchor="start" textLength="9.4" lengthAdjust="spacingAndGlyphs" class="m" stroke="#eef1f4" stroke-width="0.22">ang5</text>
<text x="820.5" y="229.0" font-size="4.9" fill="#eef1f4" text-anchor="start" textLength="4.7" lengthAdjust="spacingAndGlyphs" class="m" >90</text>
<text x="869.6" y="229.0" font-size="4.9" fill="#76818d" text-anchor="start" textLength="4.7" lengthAdjust="spacingAndGlyphs" class="m" >90</text>
<text x="899.8" y="229.0" font-size="4.9" fill="#76818d" text-anchor="start" textLength="4.7" lengthAdjust="spacingAndGlyphs" class="m" >No</text>
<path d="M739 236.35999999999999 h5 M739.3 236.35999999999999 l2.4 -4.6" stroke="#f0f2f4" stroke-width="0.7" fill="none"/><rect x="741" y="233.56" width="3" height="2.6" fill="#e4c544"/>
<text x="745.8" y="235.8" font-size="4.9" fill="#eef1f4" text-anchor="start" textLength="9.4" lengthAdjust="spacingAndGlyphs" class="m" stroke="#eef1f4" stroke-width="0.22">ang6</text>
<text x="820.5" y="235.8" font-size="4.9" fill="#eef1f4" text-anchor="start" textLength="4.7" lengthAdjust="spacingAndGlyphs" class="m" >90</text>
<text x="869.6" y="235.8" font-size="4.9" fill="#76818d" text-anchor="start" textLength="4.7" lengthAdjust="spacingAndGlyphs" class="m" >90</text>
<text x="899.8" y="235.8" font-size="4.9" fill="#76818d" text-anchor="start" textLength="4.7" lengthAdjust="spacingAndGlyphs" class="m" >No</text>
<path d="M739 238.54 v4.8 M744.2 238.54 v4.8 M739 239.34 h5.2" stroke="#e8eaec" stroke-width="0.6" fill="none"/><rect x="740.1" y="240.44" width="3.2" height="2.8" fill="#e4c544"/>
<text x="745.8" y="242.5" font-size="4.9" fill="#eef1f4" text-anchor="start" textLength="4.7" lengthAdjust="spacingAndGlyphs" class="m" stroke="#eef1f4" stroke-width="0.22">d1</text>
<text x="820.5" y="242.5" font-size="4.9" fill="#eef1f4" text-anchor="start" textLength="14.2" lengthAdjust="spacingAndGlyphs" class="m" >0.5625</text>
<text x="869.6" y="242.5" font-size="4.9" fill="#76818d" text-anchor="start" textLength="14.2" lengthAdjust="spacingAndGlyphs" class="m" >0.5625</text>
<text x="899.8" y="242.5" font-size="4.9" fill="#76818d" text-anchor="start" textLength="4.7" lengthAdjust="spacingAndGlyphs" class="m" >No</text>
<path d="M739 245.32 v4.8 M744.2 245.32 v4.8 M739 246.12 h5.2" stroke="#e8eaec" stroke-width="0.6" fill="none"/><rect x="740.1" y="247.22" width="3.2" height="2.8" fill="#e4c544"/>
<text x="745.8" y="249.3" font-size="4.9" fill="#eef1f4" text-anchor="start" textLength="4.7" lengthAdjust="spacingAndGlyphs" class="m" stroke="#eef1f4" stroke-width="0.22">d2</text>
<text x="820.5" y="249.3" font-size="4.9" fill="#eef1f4" text-anchor="start" textLength="14.2" lengthAdjust="spacingAndGlyphs" class="m" >0.5625</text>
<text x="869.6" y="249.3" font-size="4.9" fill="#76818d" text-anchor="start" textLength="14.2" lengthAdjust="spacingAndGlyphs" class="m" >0.5625</text>
<text x="899.8" y="249.3" font-size="4.9" fill="#76818d" text-anchor="start" textLength="4.7" lengthAdjust="spacingAndGlyphs" class="m" >No</text>
<path d="M739 252.1 v4.8 M744.2 252.1 v4.8 M739 252.9 h5.2" stroke="#e8eaec" stroke-width="0.6" fill="none"/><rect x="740.1" y="254.0" width="3.2" height="2.8" fill="#e4c544"/>
<text x="745.8" y="256.1" font-size="4.9" fill="#eef1f4" text-anchor="start" textLength="4.7" lengthAdjust="spacingAndGlyphs" class="m" stroke="#eef1f4" stroke-width="0.22">d3</text>
<text x="820.5" y="256.1" font-size="4.9" fill="#eef1f4" text-anchor="start" textLength="7.1" lengthAdjust="spacingAndGlyphs" class="m" >HH2</text>
<text x="869.6" y="256.1" font-size="4.9" fill="#76818d" text-anchor="start" textLength="14.2" lengthAdjust="spacingAndGlyphs" class="m" >0.7500</text>
<text x="899.8" y="256.1" font-size="4.9" fill="#76818d" text-anchor="start" textLength="4.7" lengthAdjust="spacingAndGlyphs" class="m" >No</text>
<path d="M739 258.88 v4.8 M744.2 258.88 v4.8 M739 259.67999999999995 h5.2" stroke="#e8eaec" stroke-width="0.6" fill="none"/><rect x="740.1" y="260.78" width="3.2" height="2.8" fill="#e4c544"/>
<text x="745.8" y="262.9" font-size="4.9" fill="#eef1f4" text-anchor="start" textLength="4.7" lengthAdjust="spacingAndGlyphs" class="m" stroke="#eef1f4" stroke-width="0.22">d4</text>
<text x="820.5" y="262.9" font-size="4.9" fill="#eef1f4" text-anchor="start" textLength="14.2" lengthAdjust="spacingAndGlyphs" class="m" >HH2-d1</text>
<text x="869.6" y="262.9" font-size="4.9" fill="#76818d" text-anchor="start" textLength="14.2" lengthAdjust="spacingAndGlyphs" class="m" >0.1875</text>
<text x="899.8" y="262.9" font-size="4.9" fill="#76818d" text-anchor="start" textLength="4.7" lengthAdjust="spacingAndGlyphs" class="m" >No</text>
<path d="M739 265.66 v4.8 M744.2 265.66 v4.8 M739 266.46 h5.2" stroke="#e8eaec" stroke-width="0.6" fill="none"/><rect x="740.1" y="267.56" width="3.2" height="2.8" fill="#e4c544"/>
<text x="745.8" y="269.7" font-size="4.9" fill="#eef1f4" text-anchor="start" textLength="4.7" lengthAdjust="spacingAndGlyphs" class="m" stroke="#eef1f4" stroke-width="0.22">d5</text>
<text x="820.5" y="269.7" font-size="4.9" fill="#eef1f4" text-anchor="start" textLength="9.4" lengthAdjust="spacingAndGlyphs" class="m" >HH-1</text>
<text x="869.6" y="269.7" font-size="4.9" fill="#76818d" text-anchor="start" textLength="14.2" lengthAdjust="spacingAndGlyphs" class="m" >1.0000</text>
<text x="899.8" y="269.7" font-size="4.9" fill="#76818d" text-anchor="start" textLength="4.7" lengthAdjust="spacingAndGlyphs" class="m" >No</text>
<path d="M739 272.44 v4.8 M744.2 272.44 v4.8 M739 273.23999999999995 h5.2" stroke="#e8eaec" stroke-width="0.6" fill="none"/><rect x="740.1" y="274.34" width="3.2" height="2.8" fill="#e4c544"/>
<text x="745.8" y="276.4" font-size="4.9" fill="#eef1f4" text-anchor="start" textLength="4.7" lengthAdjust="spacingAndGlyphs" class="m" stroke="#eef1f4" stroke-width="0.22">d6</text>
<text x="820.5" y="276.4" font-size="4.9" fill="#eef1f4" text-anchor="start" textLength="9.4" lengthAdjust="spacingAndGlyphs" class="m" >HH/2</text>
<text x="869.6" y="276.4" font-size="4.9" fill="#76818d" text-anchor="start" textLength="14.2" lengthAdjust="spacingAndGlyphs" class="m" >0.5000</text>
<text x="899.8" y="276.4" font-size="4.9" fill="#76818d" text-anchor="start" textLength="4.7" lengthAdjust="spacingAndGlyphs" class="m" >No</text>
<path d="M739 279.22 v4.8 M744.2 279.22 v4.8 M739 280.02 h5.2" stroke="#e8eaec" stroke-width="0.6" fill="none"/><rect x="740.1" y="281.12" width="3.2" height="2.8" fill="#e4c544"/>
<text x="745.8" y="283.2" font-size="4.9" fill="#eef1f4" text-anchor="start" textLength="4.7" lengthAdjust="spacingAndGlyphs" class="m" stroke="#eef1f4" stroke-width="0.22">d7</text>
<text x="820.5" y="283.2" font-size="4.9" fill="#eef1f4" text-anchor="start" textLength="2.4" lengthAdjust="spacingAndGlyphs" class="m" >0</text>
<text x="869.6" y="283.2" font-size="4.9" fill="#76818d" text-anchor="start" textLength="14.2" lengthAdjust="spacingAndGlyphs" class="m" >0.0000</text>
<text x="899.8" y="283.2" font-size="4.9" fill="#76818d" text-anchor="start" textLength="4.7" lengthAdjust="spacingAndGlyphs" class="m" >No</text>
<path d="M739 286.0 v4.8 M744.2 286.0 v4.8 M739 286.79999999999995 h5.2" stroke="#e8eaec" stroke-width="0.6" fill="none"/><rect x="740.1" y="287.9" width="3.2" height="2.8" fill="#e4c544"/>
<text x="745.8" y="290.0" font-size="4.9" fill="#eef1f4" text-anchor="start" textLength="4.7" lengthAdjust="spacingAndGlyphs" class="m" stroke="#eef1f4" stroke-width="0.22">d8</text>
<text x="820.5" y="290.0" font-size="4.9" fill="#eef1f4" text-anchor="start" textLength="2.4" lengthAdjust="spacingAndGlyphs" class="m" >0</text>
<text x="869.6" y="290.0" font-size="4.9" fill="#76818d" text-anchor="start" textLength="14.2" lengthAdjust="spacingAndGlyphs" class="m" >0.0000</text>
<text x="899.8" y="290.0" font-size="4.9" fill="#76818d" text-anchor="start" textLength="4.7" lengthAdjust="spacingAndGlyphs" class="m" >No</text>
<path d="M739 292.78000000000003 v4.8 M744.2 292.78000000000003 v4.8 M739 293.58 h5.2" stroke="#e8eaec" stroke-width="0.6" fill="none"/><rect x="740.1" y="294.68" width="3.2" height="2.8" fill="#e4c544"/>
<text x="745.8" y="296.8" font-size="4.9" fill="#eef1f4" text-anchor="start" textLength="4.7" lengthAdjust="spacingAndGlyphs" class="m" stroke="#eef1f4" stroke-width="0.22">d9</text>
<text x="820.5" y="296.8" font-size="4.9" fill="#eef1f4" text-anchor="start" textLength="42.5" lengthAdjust="spacingAndGlyphs" class="m" >1.11022302463e-016</text>
<text x="869.6" y="296.8" font-size="4.9" fill="#76818d" text-anchor="start" textLength="14.2" lengthAdjust="spacingAndGlyphs" class="m" >0.0000</text>
<text x="899.8" y="296.8" font-size="4.9" fill="#76818d" text-anchor="start" textLength="4.7" lengthAdjust="spacingAndGlyphs" class="m" >No</text>
<path d="M739 299.56 v4.8 M744.2 299.56 v4.8 M739 300.35999999999996 h5.2" stroke="#e8eaec" stroke-width="0.6" fill="none"/><rect x="740.1" y="301.46" width="3.2" height="2.8" fill="#e4c544"/>
<text x="745.8" y="303.6" font-size="4.9" fill="#eef1f4" text-anchor="start" textLength="7.1" lengthAdjust="spacingAndGlyphs" class="m" stroke="#eef1f4" stroke-width="0.22">d10</text>
<text x="820.5" y="303.6" font-size="4.9" fill="#eef1f4" text-anchor="start" textLength="42.5" lengthAdjust="spacingAndGlyphs" class="m" >2.22044604925e-016</text>
<text x="869.6" y="303.6" font-size="4.9" fill="#76818d" text-anchor="start" textLength="14.2" lengthAdjust="spacingAndGlyphs" class="m" >0.0000</text>
<text x="899.8" y="303.6" font-size="4.9" fill="#76818d" text-anchor="start" textLength="4.7" lengthAdjust="spacingAndGlyphs" class="m" >No</text>
<path d="M739 306.34000000000003 v4.8 M744.2 306.34000000000003 v4.8 M739 307.14 h5.2" stroke="#e8eaec" stroke-width="0.6" fill="none"/><rect x="740.1" y="308.24" width="3.2" height="2.8" fill="#e4c544"/>
<text x="745.8" y="310.3" font-size="4.9" fill="#eef1f4" text-anchor="start" textLength="7.1" lengthAdjust="spacingAndGlyphs" class="m" stroke="#eef1f4" stroke-width="0.22">d11</text>
<text x="820.5" y="310.3" font-size="4.9" fill="#eef1f4" text-anchor="start" textLength="42.5" lengthAdjust="spacingAndGlyphs" class="m" >2.22044604925e-016</text>
<text x="869.6" y="310.3" font-size="4.9" fill="#76818d" text-anchor="start" textLength="14.2" lengthAdjust="spacingAndGlyphs" class="m" >0.0000</text>
<text x="899.8" y="310.3" font-size="4.9" fill="#76818d" text-anchor="start" textLength="4.7" lengthAdjust="spacingAndGlyphs" class="m" >No</text>
<path d="M739 313.12 v4.8 M744.2 313.12 v4.8 M739 313.91999999999996 h5.2" stroke="#e8eaec" stroke-width="0.6" fill="none"/><rect x="740.1" y="315.02" width="3.2" height="2.8" fill="#e4c544"/>
<text x="745.8" y="317.1" font-size="4.9" fill="#eef1f4" text-anchor="start" textLength="7.1" lengthAdjust="spacingAndGlyphs" class="m" stroke="#eef1f4" stroke-width="0.22">d12</text>
<text x="820.5" y="317.1" font-size="4.9" fill="#eef1f4" text-anchor="start" textLength="42.5" lengthAdjust="spacingAndGlyphs" class="m" >3.33066907388e-016</text>
<text x="869.6" y="317.1" font-size="4.9" fill="#76818d" text-anchor="start" textLength="14.2" lengthAdjust="spacingAndGlyphs" class="m" >0.0000</text>
<text x="899.8" y="317.1" font-size="4.9" fill="#76818d" text-anchor="start" textLength="4.7" lengthAdjust="spacingAndGlyphs" class="m" >No</text>
<path d="M739 319.90000000000003 v4.8 M744.2 319.90000000000003 v4.8 M739 320.7 h5.2" stroke="#e8eaec" stroke-width="0.6" fill="none"/><rect x="740.1" y="321.8" width="3.2" height="2.8" fill="#e4c544"/>
<text x="745.8" y="323.9" font-size="4.9" fill="#eef1f4" text-anchor="start" textLength="7.1" lengthAdjust="spacingAndGlyphs" class="m" stroke="#eef1f4" stroke-width="0.22">d13</text>
<text x="820.5" y="323.9" font-size="4.9" fill="#eef1f4" text-anchor="start" textLength="42.5" lengthAdjust="spacingAndGlyphs" class="m" >2.77555817228e-016</text>
<text x="869.6" y="323.9" font-size="4.9" fill="#76818d" text-anchor="start" textLength="14.2" lengthAdjust="spacingAndGlyphs" class="m" >0.0000</text>
<text x="899.8" y="323.9" font-size="4.9" fill="#76818d" text-anchor="start" textLength="4.7" lengthAdjust="spacingAndGlyphs" class="m" >No</text>
<path d="M739 326.68 v4.8 M744.2 326.68 v4.8 M739 327.47999999999996 h5.2" stroke="#e8eaec" stroke-width="0.6" fill="none"/><rect x="740.1" y="328.58" width="3.2" height="2.8" fill="#e4c544"/>
<text x="745.8" y="330.7" font-size="4.9" fill="#eef1f4" text-anchor="start" textLength="7.1" lengthAdjust="spacingAndGlyphs" class="m" stroke="#eef1f4" stroke-width="0.22">d14</text>
<text x="820.5" y="330.7" font-size="4.9" fill="#eef1f4" text-anchor="start" textLength="42.5" lengthAdjust="spacingAndGlyphs" class="m" >1.11022302463e-016</text>
<text x="869.6" y="330.7" font-size="4.9" fill="#76818d" text-anchor="start" textLength="14.2" lengthAdjust="spacingAndGlyphs" class="m" >0.0000</text>
<text x="899.8" y="330.7" font-size="4.9" fill="#76818d" text-anchor="start" textLength="4.7" lengthAdjust="spacingAndGlyphs" class="m" >No</text>
<path d="M739 333.46000000000004 v4.8 M744.2 333.46000000000004 v4.8 M739 334.26 h5.2" stroke="#e8eaec" stroke-width="0.6" fill="none"/><rect x="740.1" y="335.36" width="3.2" height="2.8" fill="#e4c544"/>
<text x="745.8" y="337.5" font-size="4.9" fill="#eef1f4" text-anchor="start" textLength="7.1" lengthAdjust="spacingAndGlyphs" class="m" stroke="#eef1f4" stroke-width="0.22">d15</text>
<text x="820.5" y="337.5" font-size="4.9" fill="#eef1f4" text-anchor="start" textLength="18.9" lengthAdjust="spacingAndGlyphs" class="m" >Length-2</text>
<text x="869.6" y="337.5" font-size="4.9" fill="#76818d" text-anchor="start" textLength="14.2" lengthAdjust="spacingAndGlyphs" class="m" >0.5000</text>
<text x="899.8" y="337.5" font-size="4.9" fill="#76818d" text-anchor="start" textLength="4.7" lengthAdjust="spacingAndGlyphs" class="m" >No</text>
<path d="M739 340.24 v4.8 M744.2 340.24 v4.8 M739 341.03999999999996 h5.2" stroke="#e8eaec" stroke-width="0.6" fill="none"/><rect x="740.1" y="342.14" width="3.2" height="2.8" fill="#e4c544"/>
<text x="745.8" y="344.2" font-size="4.9" fill="#eef1f4" text-anchor="start" textLength="4.7" lengthAdjust="spacingAndGlyphs" class="m" stroke="#eef1f4" stroke-width="0.22">DI</text>
<text x="820.5" y="344.2" font-size="4.9" fill="#eef1f4" text-anchor="start" textLength="11.8" lengthAdjust="spacingAndGlyphs" class="m" >DIA/2</text>
<text x="869.6" y="344.2" font-size="4.9" fill="#76818d" text-anchor="start" textLength="14.2" lengthAdjust="spacingAndGlyphs" class="m" >0.5000</text>
<text x="899.8" y="344.2" font-size="4.9" fill="#76818d" text-anchor="start" textLength="4.7" lengthAdjust="spacingAndGlyphs" class="m" >No</text>
<rect x="738.5" y="346.82" width="5.6" height="5.2" fill="none" stroke="#e8eaec" stroke-width="0.6"/><rect x="739.8" y="348.82" width="3" height="2.6" fill="#3ea2ee"/>
<text x="745.8" y="351.0" font-size="4.9" fill="#eef1f4" text-anchor="start" textLength="7.1" lengthAdjust="spacingAndGlyphs" class="m" stroke="#eef1f4" stroke-width="0.22">DIA</text>
<text x="820.5" y="351.0" font-size="4.9" fill="#eef1f4" text-anchor="start" textLength="2.4" lengthAdjust="spacingAndGlyphs" class="m" >1</text>
<text x="869.6" y="351.0" font-size="4.9" fill="#76818d" text-anchor="start" textLength="14.2" lengthAdjust="spacingAndGlyphs" class="m" >1.0000</text>
<text x="899.8" y="351.0" font-size="4.9" fill="#eef1f4" text-anchor="start" textLength="7.1" lengthAdjust="spacingAndGlyphs" class="m" >Yes</text>
<text x="930" y="351.0" font-size="4.9" fill="#eef1f4" text-anchor="start" textLength="2.4" lengthAdjust="spacingAndGlyphs" class="m" >2</text>
<path d="M739 353.8 v4.8 M744.2 353.8 v4.8 M739 354.59999999999997 h5.2" stroke="#e8eaec" stroke-width="0.6" fill="none"/><rect x="740.1" y="355.7" width="3.2" height="2.8" fill="#e4c544"/>
<text x="745.8" y="357.8" font-size="4.9" fill="#eef1f4" text-anchor="start" textLength="4.7" lengthAdjust="spacingAndGlyphs" class="m" stroke="#eef1f4" stroke-width="0.22">HH</text>
<text x="820.5" y="357.8" font-size="4.9" fill="#eef1f4" text-anchor="start" textLength="23.6" lengthAdjust="spacingAndGlyphs" class="m" >DIA*1.7321</text>
<text x="869.6" y="357.8" font-size="4.9" fill="#76818d" text-anchor="start" textLength="14.2" lengthAdjust="spacingAndGlyphs" class="m" >1.7321</text>
<text x="899.8" y="357.8" font-size="4.9" fill="#76818d" text-anchor="start" textLength="4.7" lengthAdjust="spacingAndGlyphs" class="m" >No</text>
<path d="M739 360.58000000000004 v4.8 M744.2 360.58000000000004 v4.8 M739 361.38 h5.2" stroke="#e8eaec" stroke-width="0.6" fill="none"/><rect x="740.1" y="362.48" width="3.2" height="2.8" fill="#e4c544"/>
<text x="745.8" y="364.6" font-size="4.9" fill="#eef1f4" text-anchor="start" textLength="7.1" lengthAdjust="spacingAndGlyphs" class="m" stroke="#eef1f4" stroke-width="0.22">HH1</text>
<text x="820.5" y="364.6" font-size="4.9" fill="#eef1f4" text-anchor="start" textLength="16.5" lengthAdjust="spacingAndGlyphs" class="m" >HH*0.25</text>
<text x="869.6" y="364.6" font-size="4.9" fill="#76818d" text-anchor="start" textLength="14.2" lengthAdjust="spacingAndGlyphs" class="m" >0.4330</text>
<text x="899.8" y="364.6" font-size="4.9" fill="#76818d" text-anchor="start" textLength="4.7" lengthAdjust="spacingAndGlyphs" class="m" >No</text>
<path d="M739 367.36 v4.8 M744.2 367.36 v4.8 M739 368.15999999999997 h5.2" stroke="#e8eaec" stroke-width="0.6" fill="none"/><rect x="740.1" y="369.26" width="3.2" height="2.8" fill="#e4c544"/>
<text x="745.8" y="371.4" font-size="4.9" fill="#eef1f4" text-anchor="start" textLength="7.1" lengthAdjust="spacingAndGlyphs" class="m" stroke="#eef1f4" stroke-width="0.22">HH2</text>
<text x="820.5" y="371.4" font-size="4.9" fill="#eef1f4" text-anchor="start" textLength="16.5" lengthAdjust="spacingAndGlyphs" class="m" >HH*0.25</text>
<text x="869.6" y="371.4" font-size="4.9" fill="#76818d" text-anchor="start" textLength="14.2" lengthAdjust="spacingAndGlyphs" class="m" >0.4330</text>
<text x="899.8" y="371.4" font-size="4.9" fill="#76818d" text-anchor="start" textLength="4.7" lengthAdjust="spacingAndGlyphs" class="m" >No</text>
<path d="M739 374.14000000000004 v4.8 M744.2 374.14000000000004 v4.8 M739 374.94 h5.2" stroke="#e8eaec" stroke-width="0.6" fill="none"/><rect x="740.1" y="376.04" width="3.2" height="2.8" fill="#e4c544"/>
<text x="745.8" y="378.1" font-size="4.9" fill="#eef1f4" text-anchor="start" textLength="7.1" lengthAdjust="spacingAndGlyphs" class="m" stroke="#eef1f4" stroke-width="0.22">HH3</text>
<text x="820.5" y="378.1" font-size="4.9" fill="#eef1f4" text-anchor="start" textLength="16.5" lengthAdjust="spacingAndGlyphs" class="m" >DIA*0.7</text>
<text x="869.6" y="378.1" font-size="4.9" fill="#76818d" text-anchor="start" textLength="14.2" lengthAdjust="spacingAndGlyphs" class="m" >0.7000</text>
<text x="899.8" y="378.1" font-size="4.9" fill="#76818d" text-anchor="start" textLength="4.7" lengthAdjust="spacingAndGlyphs" class="m" >No</text>
<path d="M739 380.92 v4.8 M744.2 380.92 v4.8 M739 381.71999999999997 h5.2" stroke="#e8eaec" stroke-width="0.6" fill="none"/><rect x="740.1" y="382.82" width="3.2" height="2.8" fill="#e4c544"/>
<text x="745.8" y="384.9" font-size="4.9" fill="#eef1f4" text-anchor="start" textLength="7.1" lengthAdjust="spacingAndGlyphs" class="m" stroke="#eef1f4" stroke-width="0.22">HHb</text>
<text x="820.5" y="384.9" font-size="4.9" fill="#eef1f4" text-anchor="start" textLength="9.4" lengthAdjust="spacingAndGlyphs" class="m" >HH/2</text>
<text x="869.6" y="384.9" font-size="4.9" fill="#76818d" text-anchor="start" textLength="14.2" lengthAdjust="spacingAndGlyphs" class="m" >0.8661</text>
<text x="899.8" y="384.9" font-size="4.9" fill="#76818d" text-anchor="start" textLength="4.7" lengthAdjust="spacingAndGlyphs" class="m" >No</text>
<rect x="738.5" y="387.5" width="5.6" height="5.2" fill="none" stroke="#e8eaec" stroke-width="0.6"/><rect x="739.8" y="389.5" width="3" height="2.6" fill="#3ea2ee"/>
<text x="745.8" y="391.7" font-size="4.9" fill="#eef1f4" text-anchor="start" textLength="14.2" lengthAdjust="spacingAndGlyphs" class="m" stroke="#eef1f4" stroke-width="0.22">Length</text>
<text x="820.5" y="391.7" font-size="4.9" fill="#eef1f4" text-anchor="start" textLength="7.1" lengthAdjust="spacingAndGlyphs" class="m" >2.5</text>
<text x="869.6" y="391.7" font-size="4.9" fill="#76818d" text-anchor="start" textLength="14.2" lengthAdjust="spacingAndGlyphs" class="m" >2.5000</text>
<text x="899.8" y="391.7" font-size="4.9" fill="#eef1f4" text-anchor="start" textLength="7.1" lengthAdjust="spacingAndGlyphs" class="m" >Yes</text>
<text x="930" y="391.7" font-size="4.9" fill="#eef1f4" text-anchor="start" textLength="2.4" lengthAdjust="spacingAndGlyphs" class="m" >1</text>
<path d="M739 399.08 h5 M739.3 399.08 l2.4 -4.6" stroke="#f0f2f4" stroke-width="0.7" fill="none"/><rect x="741" y="396.28" width="3" height="2.6" fill="#e4c544"/>
<text x="745.8" y="398.5" font-size="4.9" fill="#eef1f4" text-anchor="start" textLength="2.4" lengthAdjust="spacingAndGlyphs" class="m" stroke="#eef1f4" stroke-width="0.22">R</text>
<text x="820.5" y="398.5" font-size="4.9" fill="#eef1f4" text-anchor="start" textLength="9.4" lengthAdjust="spacingAndGlyphs" class="m" >0.25</text>
<text x="869.6" y="398.5" font-size="4.9" fill="#76818d" text-anchor="start" textLength="14.2" lengthAdjust="spacingAndGlyphs" class="m" >0.2500</text>
<text x="899.8" y="398.5" font-size="4.9" fill="#76818d" text-anchor="start" textLength="4.7" lengthAdjust="spacingAndGlyphs" class="m" >No</text>
<rect x="730.6" y="400.7" width="5.2" height="5.2" fill="#2f3741" stroke="#8b96a2" stroke-width="0.6"/>
<text x="737.8" y="405.3" font-size="4.9" fill="#7d8894" text-anchor="start" textLength="35.4" lengthAdjust="spacingAndGlyphs" class="m" >User Parameters</text>
<path d="M739 412.84 l2.4 -4 l2.4 4z" fill="#e8ecf0"/><circle cx="741.4" cy="408.24" r="1.1" fill="#e8ecf0"/>
<text x="745.8" y="412.0" font-size="4.9" fill="#eef1f4" text-anchor="start" textLength="11.8" lengthAdjust="spacingAndGlyphs" class="m" stroke="#eef1f4" stroke-width="0.22">user1</text>
<text x="820.5" y="412.0" font-size="4.9" fill="#eef1f4" text-anchor="start" textLength="2.4" lengthAdjust="spacingAndGlyphs" class="m" >1</text>
<text x="869.6" y="412.0" font-size="4.9" fill="#76818d" text-anchor="start" textLength="14.2" lengthAdjust="spacingAndGlyphs" class="m" >1.0000</text>
<text x="899.8" y="412.0" font-size="4.9" fill="#eef1f4" text-anchor="start" textLength="7.1" lengthAdjust="spacingAndGlyphs" class="m" >Yes</text>
<text x="930" y="412.0" font-size="4.9" fill="#eef1f4" text-anchor="start" textLength="2.4" lengthAdjust="spacingAndGlyphs" class="m" >3</text>
<path d="M739 419.62 l2.4 -4 l2.4 4z" fill="#e8ecf0"/><circle cx="741.4" cy="415.02000000000004" r="1.1" fill="#e8ecf0"/>
<text x="745.8" y="418.8" font-size="4.9" fill="#eef1f4" text-anchor="start" textLength="11.8" lengthAdjust="spacingAndGlyphs" class="m" stroke="#eef1f4" stroke-width="0.22">user2</text>
<text x="820.5" y="418.8" font-size="4.9" fill="#eef1f4" text-anchor="start" textLength="2.4" lengthAdjust="spacingAndGlyphs" class="m" >1</text>
<text x="869.6" y="418.8" font-size="4.9" fill="#76818d" text-anchor="start" textLength="14.2" lengthAdjust="spacingAndGlyphs" class="m" >1.0000</text>
<text x="899.8" y="418.8" font-size="4.9" fill="#eef1f4" text-anchor="start" textLength="7.1" lengthAdjust="spacingAndGlyphs" class="m" >Yes</text>
<text x="930" y="418.8" font-size="4.9" fill="#eef1f4" text-anchor="start" textLength="2.4" lengthAdjust="spacingAndGlyphs" class="m" >4</text>
<rect x="730.6" y="421.0" width="5.2" height="5.2" fill="#2f3741" stroke="#8b96a2" stroke-width="0.6"/>
<text x="737.8" y="425.6" font-size="4.9" fill="#7d8894" text-anchor="start" textLength="23.6" lengthAdjust="spacingAndGlyphs" class="m" >Attributes</text>
<path d="M739 429.17999999999995 h5.6 M739 431.17999999999995 h5.6 M741.8 428.17999999999995 v5.4" stroke="#e8ecf0" stroke-width="0.7"/>
<text x="745.8" y="432.4" font-size="4.9" fill="#eef1f4" text-anchor="start" textLength="2.4" lengthAdjust="spacingAndGlyphs" class="m" stroke="#eef1f4" stroke-width="0.22">A</text>
<text x="730" y="485.2" font-size="4.6" fill="#e4e8ec" text-anchor="start" textLength="63" lengthAdjust="spacingAndGlyphs" >36: 38 of 38 parameters displayed</text>
<rect x="925.3" y="481" width="4.6" height="4.6" fill="#f4f6f8"/>
<text x="931.5" y="485" font-size="4.5" fill="#dfe4e9" text-anchor="start" textLength="54.5" lengthAdjust="spacingAndGlyphs" >Include constraint parameters</text>
</svg>
</body></html>
